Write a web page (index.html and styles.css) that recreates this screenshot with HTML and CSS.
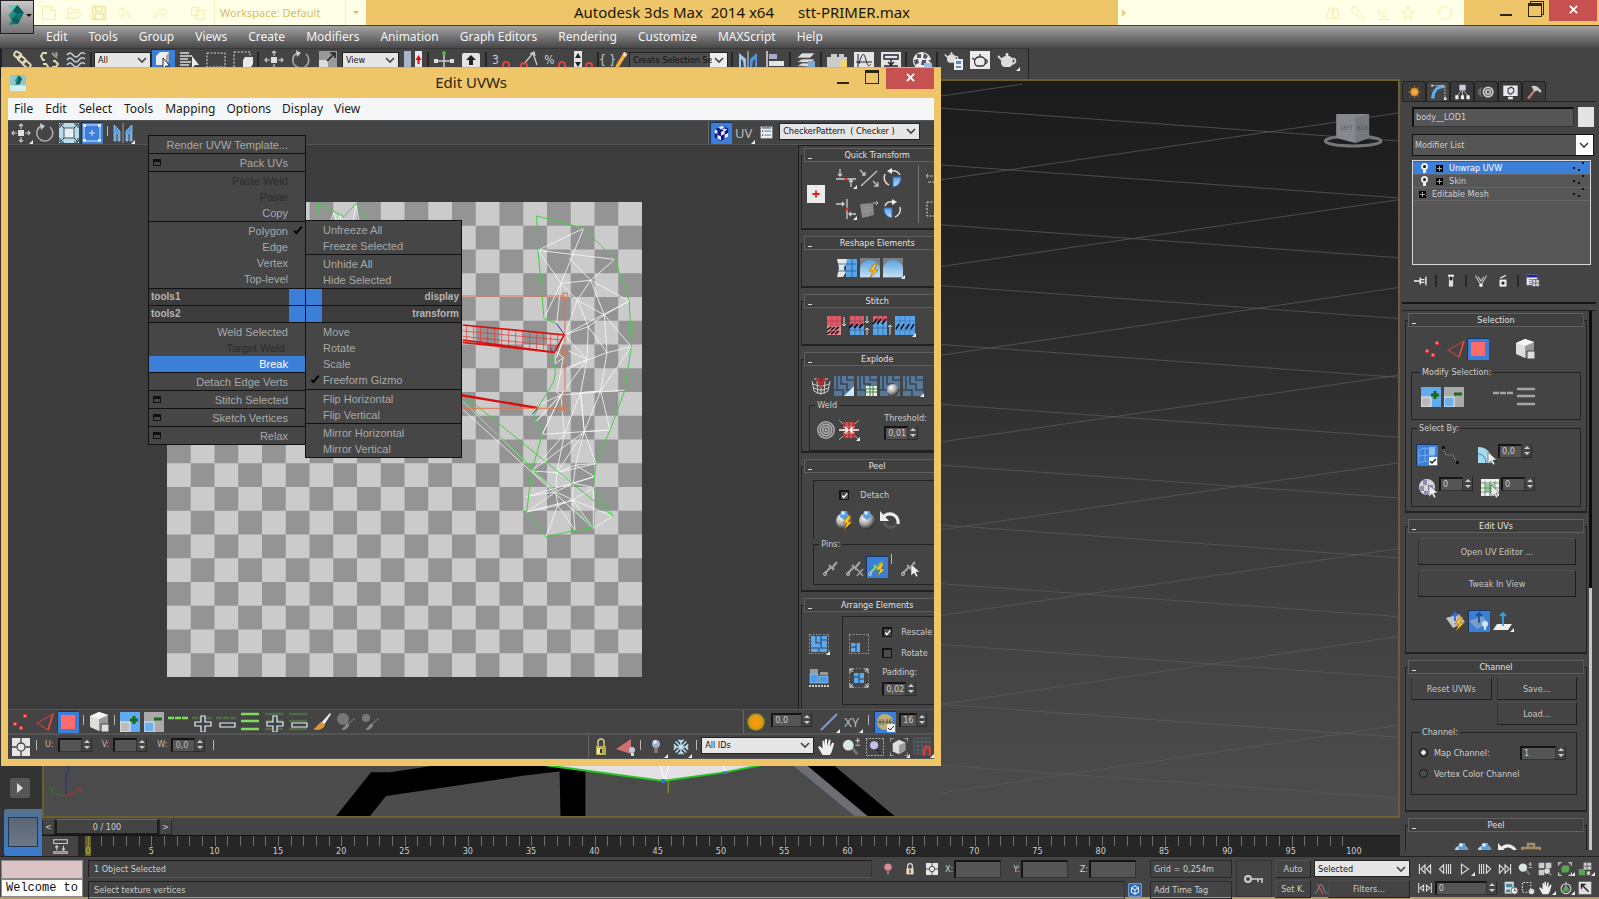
FILE: index.html
```html
<!DOCTYPE html>
<html lang="en">
<head>
    <meta charset="utf-8">
    <meta name="viewport" content="width=device-width, initial-scale=1">
    <title>Autodesk 3ds Max 2014 x64 stt-PRIMER.max</title>
    <link rel="stylesheet" href="styles.css">
</head>
<body>

    <!-- Icon sprite -->
    <svg class="sprite" aria-hidden="true">
        <defs>
            <linearGradient id="g-teal" x1="0" y1="0" x2="1" y2="1"><stop offset="0" stop-color="#2fb5aa"/><stop offset="1" stop-color="#04504f"/></linearGradient>
            <linearGradient id="g-blue" x1="0" y1="0" x2="0" y2="1"><stop offset="0" stop-color="#5aa2e0"/><stop offset="1" stop-color="#c4e0f4"/></linearGradient>
            <radialGradient id="g-ball" cx=".35" cy=".3" r=".8"><stop offset="0" stop-color="#fff"/><stop offset=".5" stop-color="#a8a8a8"/><stop offset="1" stop-color="#111"/></radialGradient>
            <radialGradient id="g-sun"><stop offset=".5" stop-color="#f39a0c"/><stop offset=".8" stop-color="#c99a1a"/><stop offset="1" stop-color="#5f7030"/></radialGradient>
            <pattern id="checks" width="47.5" height="47.5" patternUnits="userSpaceOnUse" patternTransform="translate(167 201)"><rect width="48" height="48" fill="#949494"/><path d="M23.75 0h23.75v23.75h-23.75zM0 23.75h23.75v23.75h-23.75z" fill="#cbcbcb"/></pattern>
            <linearGradient id="g-sky" x1="0" y1="0" x2="0" y2="1"><stop offset="0" stop-color="#1b1b1b"/><stop offset=".2" stop-color="#222"/><stop offset=".6" stop-color="#3b3b3b"/><stop offset="1" stop-color="#4d4d4d"/></linearGradient>
        </defs>
        <symbol id="max" viewBox="0 0 20 20"><path d="M4 1h8l6 7-5 10-9 1 3-4-3-5 4-4z" fill="url(#g-teal)"/><path d="M12 1l6 7-6 1-4-3zM7 15l5-6 1 9z" fill="#03605e"/><path d="M4 1h8L8 6z" fill="#5fcfc0"/></symbol>
        <symbol id="new" viewBox="0 0 20 20"><path d="M2 2h10l6 5v11H2zM12 2v5h6" fill="none" stroke="currentColor"/></symbol>
        <symbol id="open" viewBox="0 0 20 20"><path d="M2 17V4h6l2 2h6v3l3 2-5 6zM2 17l4-8h10" fill="none" stroke="currentColor"/></symbol>
        <symbol id="save" viewBox="0 0 20 20"><path d="M2 2h14l2 2v14H2zM6 2v6h8V2M5 18v-7h10v7" fill="none" stroke="currentColor" stroke-width="2"/></symbol>
        <symbol id="undo" viewBox="0 0 20 20"><path d="M2 9l6-6v4c6 0 10 3 10 9-2-4-5-5-10-5v4z" fill="none" stroke="currentColor"/></symbol>
        <symbol id="redo" viewBox="0 0 20 20"><path d="M18 9l-6-6v4C6 7 2 10 2 16c2-4 5-5 10-5v4z" fill="none" stroke="currentColor"/></symbol>
        <symbol id="pages" viewBox="0 0 20 20"><path d="M2 3h9v10H2zM8 7h10v11H8z" fill="none" stroke="currentColor"/></symbol>
        <symbol id="binoc" viewBox="0 0 20 20"><path d="M2 17l3-13h4v13zM11 17V4h4l3 13z" fill="none" stroke="currentColor"/></symbol>
        <symbol id="wrench" viewBox="0 0 20 20"><path d="M3 3c5-2 8 1 7 5l8 8-3 3-8-8C3 12 1 8 3 3z" fill="none" stroke="currentColor"/></symbol>
        <symbol id="dish" viewBox="0 0 20 20"><path d="M4 5l10 9c-6 2-12-2-10-9zM10 9l6-6M4 18h14" fill="none" stroke="currentColor"/></symbol>
        <symbol id="star" viewBox="0 0 20 20"><path d="M10 2l2 6h6l-5 4 2 6-5-4-5 4 2-6-5-4h6z" fill="none" stroke="currentColor"/></symbol>
        <symbol id="ring" viewBox="0 0 20 20"><circle cx="10" cy="10" r="8" fill="none" stroke="currentColor"/></symbol>

        <!-- main toolbar -->
        <symbol id="link" viewBox="0 0 20 20"><g fill="none" stroke="#e2d9b4" stroke-width="2"><rect x="2" y="2" width="7" height="5" rx="2" transform="rotate(35 5 5)"/><rect x="6" y="7" width="8" height="5" rx="2" transform="rotate(40 10 9)"/><rect x="11" y="12" width="8" height="5" rx="2" transform="rotate(40 15 14)"/></g></symbol>
        <symbol id="unlink" viewBox="0 0 20 20"><g fill="none" stroke="#e2d9b4" stroke-width="2"><path d="M8 3H4L2 6l2 4h2M13 17h4l2-3-3-3h-2"/><path d="M4 14h3l3 4" /></g><path d="M13 3l5 5M17 2l1 4" stroke="#999" stroke-width="2"/></symbol>
        <symbol id="waves" viewBox="0 0 20 20"><path d="M1 5q3-4 6 0t6 0 6-1M1 10q3-4 6 0t6 0 6-1M1 15q3-4 6 0t6 0 6-1" fill="none" stroke="#c5cdd4" stroke-width="1.500"/></symbol>
        <symbol id="selobj" viewBox="0 0 20 20"><path d="M3 6l4-4h9v9l-3 4H3z" fill="#eee"/><path d="M13 15V6l3-4v9z" fill="#aaa"/><path d="M10 8v11l3-3h4z" fill="#fff" stroke="#222"/></symbol>
        <symbol id="byname" viewBox="0 0 20 20"><path d="M1 3h9M1 6h12M1 9h8M1 12h11M1 15h9M1 18h12" stroke="#ddd" stroke-width="1.500"/><path d="M13 6v12l3-3h4z" fill="#eee"/></symbol>
        <symbol id="dashrect" viewBox="0 0 20 20"><path d="M1 3h18v14H1z" fill="none" stroke="#ddd" stroke-dasharray="2 1.5"/></symbol>
        <symbol id="dashwin" viewBox="0 0 20 20"><path d="M1 2h16v16H1z" fill="none" stroke="#ddd" stroke-dasharray="2 1.5"/><path d="M10 10l2-3h8v7l-2 3h-8z" fill="#e8e8e8"/></symbol>
        <symbol id="move" viewBox="0 0 20 20"><path d="M10 1v5M10 14v5M1 10h5M14 10h5M8 3l2-2 2 2M8 17l2 2 2-2M3 8l-2 2 2 2M17 8l2 2-2 2" fill="none" stroke="#c8c8c8" stroke-width="1.2"/><path d="M7 7h6v6H7z" fill="#e0e0e0"/></symbol>
        <symbol id="rotate" viewBox="0 0 20 20"><path d="M15 4a8 8 0 1 1-9-1" fill="none" stroke="#aaa" stroke-width="1.6"/><path d="M5 0l5 3-4 4z" fill="#ccc"/></symbol>
        <symbol id="scale" viewBox="0 0 20 20"><path d="M1 1h18v18H1z" fill="#999"/><path d="M1 10h9v9H1z" fill="#ddd"/><path d="M9 11l8-8M12 3h5v5" stroke="#222" stroke-width="1.6" fill="none"/></symbol>
        <symbol id="pivot" viewBox="0 0 20 20"><path d="M1 1h7v18H1z" fill="#a9b4c8"/><path d="M12 1h7v18h-7z" fill="#e4e4ea"/><path d="M15.500 5l3 5h-2v4h-2v-4h-2z" fill="#c11"/></symbol>
        <symbol id="manip" viewBox="0 0 20 20"><path d="M10 3v14M1 11h18" stroke="#ccc" stroke-width="1.500"/><circle cx="10" cy="3" r="2" fill="#4b4"/><path d="M0 9h4v4H0zM16 9h4v4h-4z" fill="#ddd"/></symbol>
        <symbol id="kbd" viewBox="0 0 20 20"><rect x="1" y="3" width="18" height="15" rx="2" fill="#e4e4e4"/><path d="M10 5l5 5h-3v5H8v-5H5z" fill="#222"/></symbol>
        <symbol id="magnet" viewBox="0 0 20 20"><path d="M12 19v-4a3 3 0 0 1 6 0v4" fill="none" stroke="#d44" stroke-width="2"/></symbol>
        <symbol id="angle" viewBox="0 0 20 20"><path d="M5 14L14 3l4 12M11 4l4-2 1 4" fill="none" stroke="#ccc" stroke-width="1.300"/><path d="M2 19v-3a3 3 0 0 1 6 0v3" fill="none" stroke="#d44" stroke-width="2"/></symbol>
        <symbol id="updown" viewBox="0 0 20 20"><path d="M1 1h8v18H1z" fill="#e4e4e4"/><path d="M5 3l3 5H2zM5 17l3-5H2z" fill="#222"/><path d="M13 19v-3a3 3 0 0 1 6 0v3" fill="none" stroke="#d44" stroke-width="2"/></symbol>
        <symbol id="pencil" viewBox="0 0 20 20"><path d="M8 15L16 2l3 2-8 13-4 2z" fill="#f0b040"/><path d="M16 2l3 2-1 3-3-2z" fill="#f3e6c8"/></symbol>
        <symbol id="mirror" viewBox="0 0 20 20"><path d="M1 3l7 6v9H6l-1-7-2-2v9H1z" fill="#9fc6ec"/><path d="M19 3l-7 6v9h2l1-7 2-2v9h2z" fill="#4f93dd"/><path d="M10 1v18" stroke="#ddd"/></symbol>
        <symbol id="align" viewBox="0 0 20 20"><path d="M2 1v18" stroke="#ddd" stroke-width="1.500"/><path d="M4 4h8v5H4z" fill="#aac"/><path d="M4 11h15v5H4z" fill="#e4e4e4"/></symbol>
        <symbol id="layers" viewBox="0 0 20 20"><path d="M1 8l5-5h13l-5 5zM1 12l5-3h13l-5 4zM1 16l5-3h13l-5 4z" fill="#ddd" stroke="#444" stroke-width=".6"/><path d="M12 11h7v8h-7z" fill="#7fa9cf"/></symbol>
        <symbol id="ribbon" viewBox="0 0 20 20"><path d="M0 7h4V4h6v3h2V4h5v3h3v11H0z" fill="#ccc"/><circle cx="17" cy="14" r="4" fill="#f3d66a"/></symbol>
        <symbol id="curve" viewBox="0 0 20 20"><path d="M0 2h20v18H0z" fill="#e4e4e4"/><path d="M4 4v14M2 12h16M5 14c3-12 5-12 7-4s3 6 5 4" stroke="#223" fill="none"/></symbol>
        <symbol id="schem" viewBox="0 0 20 20"><path d="M0 2h20v18H0z" fill="#e4e4e4"/><path d="M3 5h14v4H3zM10 9v6M7 12l3 3 3-3M3 16h14" fill="none" stroke="#223" stroke-width="1.400"/></symbol>
        <symbol id="material" viewBox="0 0 20 20"><circle cx="10" cy="11" r="9" fill="#eee"/><path d="M5 4h4v4H5zM12 3l4 3-2 3-3-1zM2 10l4-1 1 4-4 2zM10 10h4v5h-5zM16 10h3v3z" fill="#556"/><path d="M12 13h8v7h-8z" fill="#9ac0e0"/></symbol>
        <symbol id="teapot" viewBox="0 0 20 20"><path d="M5 8c3-3 8-3 10 0 2 4 0 8-2 9H7c-3-1-4-5-2-9z" fill="#ddd"/><path d="M5 10L1 6M15 9c4-2 5 4 0 5" fill="none" stroke="#ddd" stroke-width="1.800"/><circle cx="10" cy="4.500" r="1.500" fill="#eee"/></symbol>
        <symbol id="potset" viewBox="0 0 20 20"><use href="#teapot" width="17" height="15"/><path d="M11 9h9v11h-9z" fill="#eee"/><path d="M13 11h5v3h-5zM13 16h5v2h-5z" fill="#5b8fc4"/></symbol>
        <symbol id="potwin" viewBox="0 0 20 20"><path d="M0 1h20v18H0z" fill="#ececec"/><path d="M5 9c3-3 8-3 10 0 1 4 0 6-2 7H7c-2-1-3-4-2-7zM5 10L2 8M15 10c3-1 3 3 0 4M10 4v2" fill="none" stroke="#333" stroke-width="1.300"/></symbol>

        <!-- component modes -->
        <symbol id="verts" viewBox="0 0 20 20"><g fill="#fff" stroke="#d33" stroke-width="1.500"><circle cx="4" cy="12" r="1.500"/><circle cx="14" cy="4" r="1.500"/><circle cx="10" cy="16" r="1.500"/></g></symbol>
        <symbol id="edge" viewBox="0 0 20 20"><path d="M2 11L18 2l-5 16z" fill="none" stroke="#b84040" stroke-width="1.300"/><path d="M18 2l-5 16" stroke="#e44" stroke-width="1.500"/></symbol>
        <symbol id="poly" viewBox="0 0 20 20"><path d="M3 3h14v14H3z" fill="#ff6b6b"/></symbol>
        <symbol id="cube" viewBox="0 0 20 20"><path d="M1 4l9-4 9 3v11l-9 5-9-4z" fill="#ddd"/><path d="M10 7l9-4v11l-9 5z" fill="#999"/><path d="M1 4l9-4 9 3-9 4z" fill="#f6f6f6"/><path d="M12 12h8v8h-8z" fill="#ddd" stroke="#444"/></symbol>
        <symbol id="grow" viewBox="0 0 20 20"><path d="M0 0h20v20H0z" fill="#62abf0"/><path d="M0 10h10v10H0z" fill="#bbb" stroke="#eee"/><path d="M14 4v8M10 8h8" stroke="#176b17" stroke-width="3"/></symbol>
        <symbol id="shrink" viewBox="0 0 20 20"><path d="M0 0h20v20H0z" fill="#aaa"/><path d="M0 10h10v10H0z" fill="#6cb0ee" stroke="#eee"/><path d="M10 7h8" stroke="#176b17" stroke-width="3"/></symbol>
        <symbol id="dash3" viewBox="0 0 20 20"><path d="M0 6h20" stroke="currentColor" stroke-width="2.500" stroke-dasharray="6 1"/></symbol>
        <symbol id="lines3" viewBox="0 0 20 20"><path d="M1 2h18M1 9h18M1 17h18" stroke="currentColor" stroke-width="2.500"/></symbol>
        <symbol id="plus" viewBox="0 0 20 20"><path d="M9 4h4v6h6v4h-6v6H9v-6H3v-4h6z" fill="#39424c" stroke="#eee" stroke-width="1.200"/></symbol>
        <symbol id="minus" viewBox="0 0 20 20"><path d="M4 11h15v4H4z" fill="#39424c" stroke="#eee" stroke-width="1.200"/></symbol>
        <symbol id="brush" viewBox="0 0 20 20"><path d="M9 11l9-10 1 1-7 11z" fill="#eee"/><path d="M10 10l3 3c-2 5-8 6-12 4 4-1 5-6 9-7z" fill="#dd952f"/></symbol>
        <symbol id="brushoff" viewBox="0 0 20 20"><circle cx="7" cy="7" r="6" fill="#777"/><path d="M12 12l7-6M13 13c-2 4-4 5-7 4 3-1 3-4 5-5z" fill="#888" stroke="#888"/></symbol>
        <symbol id="brushoff2" viewBox="0 0 20 20"><circle cx="6" cy="6" r="4" fill="#777"/><path d="M12 12l7-6M13 13c-2 4-4 5-7 4 3-1 3-4 5-5z" fill="#888" stroke="#888"/></symbol>

        <!-- uv editor -->
        <symbol id="scalebox" viewBox="0 0 20 20"><path d="M0 0h20v20H0z" fill="#b9dcea"/><path d="M5 5h10v10H5z" fill="#e9eef2" stroke="#456"/><path d="M1 5V1h4M15 1h4v4M19 15v4h-4M5 19H1v-4M1 1l4 4M19 1l-4 4M1 19l4-4M19 19l-4-4" stroke="#234" fill="none"/></symbol>
        <symbol id="freeform" viewBox="0 0 20 20"><path d="M2 2h16v16H2zM10 7v6M7 10h6" fill="none" stroke="#dde8f8"/><path d="M1 1h3v3H1zM16 1h3v3h-3zM1 16h3v3H1zM16 16h3v3h-3z" fill="#dde8f8"/></symbol>
        <symbol id="mirrorblue" viewBox="0 0 20 20"><path d="M1 2l6 6v10H5V11l-2-2v9H1zM19 2l-6 6v10h2V11l2-2v9h2z" fill="#4a9ae8" stroke="#bfe0ff" stroke-width=".6"/><path d="M10 0v20" stroke="#999"/></symbol>
        <symbol id="dice" viewBox="0 0 20 20"><path d="M3 6l8-4 7 3v9l-8 5-7-4z" fill="#0b1b8a"/><path d="M7 4l4-2 3 2-4 2zM3 6l3 1v4l-3-1zM10 9l4-2v4l-4 2zM6 12l4 2v4l-4-2zM14 12l4-2v4l-4 2zM11 6l3-1 3 1-3 2z" fill="#eef"/></symbol>
        <symbol id="list" viewBox="0 0 20 20"><path d="M1 1h18v18H1z" fill="#eee"/><path d="M3 3h14" stroke="#333" stroke-width="1.500"/><path d="M3 8h2M3 14h2" stroke="#333" stroke-width="2"/><path d="M7 8h10M7 14h10" stroke="#5a9ad8" stroke-width="2"/></symbol>
        <symbol id="pivotred" viewBox="0 0 20 20"><path d="M0 0h20v20H0z" fill="#ececec"/><path d="M10 6v8M6 10h8" stroke="#d22" stroke-width="2"/></symbol>
        <symbol id="alignh" viewBox="0 0 20 20"><path d="M4 1v7M2 6l2 2 2-2M0 11h20M15 12v7M13 14l2-2 2 2" fill="none" stroke="#ccc" stroke-width="1.300"/><circle cx="10" cy="11" r="1.500" fill="#e22"/></symbol>
        <symbol id="alignv" viewBox="0 0 20 20"><path d="M0 5h8M6 3l2 2-2 2M11 0v20M20 15h-7M15 13l-2 2 2 2" fill="none" stroke="#ccc" stroke-width="1.300"/><circle cx="11" cy="10" r="1.500" fill="#e22"/></symbol>
        <symbol id="diag" viewBox="0 0 20 20"><path d="M2 18L18 3M1 2l5 5M14 13l5 5M3 7h3V4M15 18h4v-4" fill="none" stroke="#c4c4c4" stroke-width="1.300"/></symbol>
        <symbol id="rotcw" viewBox="0 0 20 20"><path d="M11 9v10a9 9 0 0 0 8-10z" fill="url(#g-blue)" stroke="#2a6fb5"/><path d="M3 6a8 8 0 0 0 4 11M8 3c5-1 8 0 10 4" fill="none" stroke="#ddd" stroke-width="1.500"/><path d="M10 0v6L5 3z" fill="#eee"/></symbol>
        <symbol id="rotccw" viewBox="0 0 20 20"><path d="M10 9v10a9 9 0 0 1-8-10z" fill="url(#g-blue)" stroke="#2a6fb5"/><path d="M18 8a8 8 0 0 1-5 10M3 7c1-3 4-5 8-4" fill="none" stroke="#ddd" stroke-width="1.500"/><path d="M10 0v6l5-3z" fill="#eee"/></symbol>
        <symbol id="tilt" viewBox="0 0 20 20"><path d="M1 5l13-1 1 12-12 3z" fill="#888"/><path d="M3 9l11-1M3 13l11-2M7 5l2 13" stroke="#999"/><path d="M14 4h5M17 2l2 2-2 2" fill="none" stroke="#bbb"/></symbol>
        <symbol id="spread" viewBox="0 0 20 20"><path d="M0 8h8M2 6L0 8l2 2M10 14V3M10 8h10M2 14h16" fill="none" stroke="#bbb" stroke-dasharray="3 1"/></symbol>
        <symbol id="straight" viewBox="0 0 20 20"><path d="M0 1h10v5c-4 3-4 5-1 8l-3 5H0l2-9z" fill="#e6e6e6"/><path d="M10 1h10v18H9V6z" fill="#5aa4ea"/><path d="M1 6h18M1 13h18M15 1v18" stroke="#235d9c" stroke-width=".8"/></symbol>
        <symbol id="dome" viewBox="0 0 20 20"><path d="M0 0h20v20H0z" fill="#7b7f85"/><path d="M0 19V11a10 9 0 0 1 20 0v8z" fill="url(#g-blue)"/></symbol>
        <symbol id="bolt" viewBox="0 0 20 20"><path d="M14 6l-5 7h4l-3 7 8-8h-4l3-6z" fill="#ffc52e" stroke="#8a5a00" stroke-width=".6"/></symbol>
        <symbol id="stitch1" viewBox="0 0 20 20"><path d="M1 0h14v10H1z" fill="#e05a68"/><path d="M1 10h14v9H1z" fill="#e08a94"/><path d="M1 5h14M6 0v19M11 0v19" stroke="#b84050" stroke-width=".8"/><path d="M1 14l4-3M5 14l4-3M9 14l4-3M1 18l4-3M5 18l4-3M9 18l4-3" stroke="#111" stroke-width="1.500"/><path d="M18 1v9M16 8l2 2 2-2" stroke="#ddd" fill="none"/></symbol>
        <symbol id="stitch2" viewBox="0 0 20 20"><path d="M1 0h14v9H1z" fill="#e05a68"/><path d="M1 9h14v10H1z" fill="#5aa4ea"/><path d="M1 5h14M1 14h14M6 0v19M11 0v19" stroke="#446" stroke-width=".5"/><path d="M0 12l4-4M5 12l4-4M10 12l4-4" stroke="#111" stroke-width="1.800"/><path d="M18 0v7M16 5l2 2 2-2M18 19v-7M16 14l2-2 2 2" stroke="#ddd" fill="none"/></symbol>
        <symbol id="stitch3" viewBox="0 0 20 20"><path d="M1 0h14v5H1z" fill="#e05a68"/><path d="M1 5h14v14H1z" fill="#5aa4ea"/><path d="M1 12h14M6 0v19M11 0v19" stroke="#246" stroke-width=".5"/><path d="M1 8l4-5M5 8l4-5M10 8l4-5" stroke="#111" stroke-width="1.800"/><path d="M18 19V9M16 11l2-2 2 2" stroke="#ddd" fill="none"/></symbol>
        <symbol id="stitch4" viewBox="0 0 20 20"><path d="M0 0h20v19H0z" fill="#5aa4ea"/><path d="M0 5h20M0 14h20M5 0v19M10 0v19M15 0v19" stroke="#2f6fae" stroke-width=".6"/><path d="M1 13l3-5M6 13l3-5M11 13l3-5M16 13l3-5" stroke="#112" stroke-width="1.500"/></symbol>
        <symbol id="basket" viewBox="0 0 20 20"><path d="M1 5l2 10q7 5 14 0l2-10M2 8q8 4 16 0M3 12q7 4 14 0M6 5l1 13M10 6v13M14 5l-1 13M3 3h5M12 3h5" fill="none" stroke="#ccc"/><path d="M6 2l4 7 3-7" fill="none" stroke="#c22" stroke-width="2.500"/></symbol>
        <symbol id="bricks" viewBox="0 0 20 20"><path d="M0 0h20v20H0z" fill="#587896"/><path d="M7 0v8h6v6h7M13 0v4h7M0 14h9v6M3 0v14" fill="none" stroke="#33475c" stroke-width="1.600"/></symbol>
        <symbol id="bricks2" viewBox="0 0 20 20"><path d="M2 2h16v16H2z" fill="#62a8e6"/><path d="M7 2v7h5v5h6M12 2v7M2 14h8v4M12 6h6" fill="none" stroke="#24507f" stroke-width="1.200"/><path d="M0 0h20v20H0z" fill="none" stroke="#ddd" stroke-dasharray="2 1.500"/></symbol>
        <symbol id="bricksml" viewBox="0 0 20 20"><path d="M2 9h9v9H2z" fill="#62a8e6"/><path d="M2 13h5V9M7 13v5" fill="none" stroke="#1d3f66"/><path d="M0 0h20v20H0z" fill="none" stroke="#ddd" stroke-dasharray="2 1.500"/></symbol>
        <symbol id="bricksmid" viewBox="0 0 20 20"><path d="M5 5h10v10H5z" fill="#62a8e6"/><path d="M5 9h5V5M10 9v6M10 11h5" fill="none" stroke="#1d3f66"/><path d="M1 5V1h4M15 1h4v4M19 15v4h-4M5 19H1v-4M1 1l3 3M19 1l-3 3M1 19l3-3M19 19l-3-3" stroke="#ddd" fill="none"/><path d="M0 0h20v20H0z" fill="none" stroke="#bbb" stroke-dasharray="1.500 2"/></symbol>
        <symbol id="packs" viewBox="0 0 20 20"><path d="M1 1h8v5H1zM11 4h8v3h-8z" fill="#999"/><path d="M1 6h8v9H1zM10 8h9v7h-9z" fill="#4d9de8" stroke="#bfe0ff" stroke-width=".5"/><path d="M0 18h20" stroke="#ccc" stroke-width="2" stroke-dasharray="2 1"/></symbol>
        <symbol id="corner" viewBox="0 0 20 20"><path d="M20 10v10H10z" fill="#cfe6ff"/></symbol>
        <symbol id="ball" viewBox="0 0 20 20"><circle cx="10" cy="10" r="6" fill="url(#g-ball)"/></symbol>
        <symbol id="minigrid" viewBox="0 0 20 20"><path d="M9 10h11v10H9z" fill="#eee"/><path d="M9 13h11M9 16h11M13 10v10M16 10v10" stroke="#3a8a3a"/></symbol>
        <symbol id="target" viewBox="0 0 20 20"><circle cx="10" cy="10" r="9" fill="#aaa"/><g fill="none" stroke="#555"><circle cx="10" cy="10" r="7"/><circle cx="10" cy="10" r="4.500"/><circle cx="10" cy="10" r="2"/></g></symbol>
        <symbol id="weld" viewBox="0 0 20 20"><path d="M4 2h12v16H4z" fill="#b13b3b"/><path d="M8 2v16M12 2v16M4 7h12M4 13h12" stroke="#eaa" stroke-width=".6"/><path d="M0 10h8M12 10h8M6 7l3 3-3 3M14 7l-3 3 3 3" stroke="#fff" fill="none" stroke-width="1.500"/><path d="M0 0l4 4M20 0l-4 4M0 20l4-4M20 20l-4-4" stroke="#aaa"/></symbol>
        <symbol id="peelball" viewBox="0 0 20 20"><circle cx="10" cy="11" r="8" fill="url(#g-ball)"/><path d="M7 1h6l1 6-4 3-4-3z" fill="#5b9fdc"/><circle cx="9" cy="3" r="1.800" fill="#dff0ff"/></symbol>
        <symbol id="reset" viewBox="0 0 20 20"><path d="M4 12a7 7 0 0 0 12 3" stroke="#5a5a5a" stroke-width="3" fill="none"/><path d="M4 6c7-5 15 0 14 8" stroke="#eee" stroke-width="3" fill="none"/><path d="M0 1v10h9z" fill="#eee"/></symbol>
        <symbol id="pin" viewBox="0 0 20 20"><path d="M3 16l6-6M7 8l5 5M10 11l5-6" stroke="currentColor" stroke-width="2" fill="none"/><circle cx="3" cy="17" r="1.500" fill="none" stroke="#ccc"/></symbol>
        <symbol id="cursor" viewBox="0 0 20 20"><path d="M11 7v12l3-3 2 4 2-1-2-4h4z" fill="#eee" stroke="#333" stroke-width=".5"/></symbol>
        <symbol id="cross" viewBox="0 0 20 20"><path d="M12 12l6 7M18 12l-6 7" stroke="#999" stroke-width="1.800"/></symbol>

        <symbol id="sun" viewBox="0 0 20 20"><circle cx="10" cy="10" r="9" fill="url(#g-sun)"/></symbol>
        <symbol id="slash" viewBox="0 0 20 20"><path d="M2 18L18 2" stroke="#7d9be0" stroke-width="2"/></symbol>
        <symbol id="brushsym" viewBox="0 0 20 20"><circle cx="10" cy="10" r="8" fill="#bfae72"/><path d="M2 10h16M5 7v6M8 7v6M12 7v6M15 7v6" stroke="#555"/><path d="M12 12h8v8h-8z" fill="#eee"/><path d="M13 16l2 2 4-4" stroke="#222" fill="none"/></symbol>
        <symbol id="lockgold" viewBox="0 0 20 20"><path d="M7 10V5a3 3 0 0 1 6 0v5" fill="none" stroke="#d3cc84" stroke-width="1.500"/><path d="M5 9h10v9H5z" fill="#b5a956"/><path d="M6 11h4v6H6z" fill="#e8e2b0"/><path d="M10 12v4" stroke="#333" stroke-width="2"/></symbol>
        <symbol id="tri" viewBox="0 0 20 20"><path d="M1 12L16 2v15z" fill="#cf6f70"/><circle cx="17" cy="13" r="3" fill="#bcd"/><path d="M16 16h3v3h-3z" fill="#ddd"/></symbol>
        <symbol id="bulb" viewBox="0 0 20 20"><circle cx="9" cy="7" r="4" fill="#9fb2bf"/><circle cx="8" cy="5" r="2" fill="#dde8f0"/><path d="M7 11h4v5H7z" fill="#777"/></symbol>
        <symbol id="snow" viewBox="0 0 20 20"><path d="M10 2v16M2 10h16M4 4l12 12M16 4L4 16M7 2l3 3 3-3M7 18l3-3 3 3M2 7l3 3-3 3M18 7l-3 3 3 3" stroke="#bfe2f8" stroke-width="1.500" fill="none"/></symbol>
        <symbol id="hand" viewBox="0 0 20 20"><path d="M5 19L0 10l2-1 3 3V3h2v6L8 1h2v8l2-7h2l-1 8 3-5 2 1-3 10-2 3z" fill="#eee"/></symbol>
        <symbol id="lens" viewBox="0 0 20 20"><path d="M11 11l6 7" stroke="#777" stroke-width="3"/><circle cx="7" cy="8" r="6" fill="#d8e6e6"/><path d="M15 3h5M17.500 0v6M15 8h5" stroke="#ddd"/></symbol>
        <symbol id="lensbox" viewBox="0 0 20 20"><path d="M0 0h20v20H0z" fill="none" stroke="#ddd" stroke-width="1.500" stroke-dasharray="2 1.500"/><path d="M11 11l5 6" stroke="#335" stroke-width="3"/><circle cx="9" cy="8" r="4.500" fill="#c8c0e8"/></symbol>
        <symbol id="cubefit" viewBox="0 0 20 20"><path d="M3 6l7-4 7 3v9l-7 4-7-3z" fill="#ddd"/><path d="M10 8l7-3v9l-7 4z" fill="#999"/><path d="M0 4V0h4M16 0h4v4M20 16v4h-4M4 20H0v-4" stroke="#eee" fill="none"/></symbol>
        <symbol id="gridmag" viewBox="0 0 20 20"><path d="M1 1h16v16H1zM5 1v16M9 1v16M13 1v16M1 5h16M1 9h16M1 13h16" stroke="#667080" fill="none" stroke-width=".7"/><path d="M11 19v-6a3 3 0 0 1 6 0v6" stroke="#d43a3a" stroke-width="2.500" fill="none"/></symbol>
        <symbol id="coord" viewBox="0 0 20 20"><path d="M0 0h20v20H0z" fill="#e6e6e6"/><circle cx="10" cy="10" r="4.500" fill="none" stroke="#444" stroke-width="1.500"/><path d="M10 0v5M10 15v5M0 10h5M15 10h5" stroke="#444" stroke-width="1.500"/></symbol>

        <!-- command panel -->
        <symbol id="burst" viewBox="0 0 20 20"><circle cx="10" cy="10" r="5" fill="#f09a2a"/><circle cx="10" cy="10" r="2.500" fill="#fff0a0"/><path d="M10 2v16M2 10h16M4 4l12 12M16 4L4 16" stroke="#d98a2a" stroke-width=".8"/></symbol>
        <symbol id="arc" viewBox="0 0 20 20"><path d="M3 18C3 9 8 3 17 3" stroke="#5cb0f0" stroke-width="4" fill="none"/><path d="M2 2h16v16" stroke="#ccc" stroke-dasharray="3 1" fill="none"/><path d="M1 1h2v2H1zM17 17h3v3h-3z" fill="#eee"/></symbol>
        <symbol id="tree" viewBox="0 0 20 20"><path d="M6 1h8v7H6z" fill="#ccd"/><path d="M10 8v7M9 8l-6 7M11 8l6 7" stroke="#ccc"/><path d="M1 14h4v5H1zM8 14h4v5H8zM15 14h4v5h-4z" fill="#eee"/></symbol>
        <symbol id="motion" viewBox="0 0 20 20"><circle cx="12" cy="10" r="7" fill="#ccc"/><circle cx="12" cy="10" r="4.500" fill="none" stroke="#444"/><circle cx="12" cy="10" r="1.800" fill="#555"/><path d="M4 4q-4 6 0 12M1 6q-2 4 0 8" stroke="#999" fill="none"/></symbol>
        <symbol id="display" viewBox="0 0 20 20"><path d="M1 2h18v13H1zM7 16h6v3H7z" fill="#e6e6f0"/><path d="M7 6l4-2 3 2v4l-4 3-3-2z" fill="none" stroke="#333" stroke-width="1.300"/></symbol>
        <symbol id="hammer" viewBox="0 0 20 20"><path d="M2 18l9-11" stroke="#b98078" stroke-width="3"/><path d="M6 3c4-2 8-1 13 6l-2 2-3-3-4 1z" fill="#ccc"/></symbol>
        <symbol id="pushpin" viewBox="0 0 20 20"><path d="M0 10h8M9 5v10M9 8h6M9 12h6M17 4v12" stroke="#eee" stroke-width="2"/></symbol>
        <symbol id="tube" viewBox="0 0 20 20"><path d="M6 1h8v3H6z" fill="#fff"/><path d="M7 4h6v14H7z" fill="#ddd"/><path d="M8 4h4v5H8z" fill="#222"/></symbol>
        <symbol id="unique" viewBox="0 0 20 20"><path d="M2 2l8 14 8-14M6 4l4 6 4-6" fill="none" stroke="#ccc" stroke-width="1.500"/><circle cx="10" cy="16" r="2.500" fill="#eee"/></symbol>
        <symbol id="trash" viewBox="0 0 20 20"><path d="M5 8h10v10H5z" fill="#eee"/><path d="M6 6l8-4" stroke="#ddd" stroke-width="2"/><path d="M8 11h4v4H8z" fill="#222"/></symbol>
        <symbol id="config" viewBox="0 0 20 20"><path d="M1 1h15v15H1z" fill="#eef"/><path d="M1 1h15v4H1z" fill="#22a"/><path d="M4 8h4M4 11h4M4 14h4" stroke="#338"/><path d="M9 8h10v10H9z" fill="#ddd" stroke="#444"/><path d="M9 13h10M14 8v10" stroke="#444"/></symbol>
        <symbol id="eltsel" viewBox="0 0 20 20"><path d="M2 5l6-2v13l-6 2zM8 3l8 2v12l-8-1M2 11l6-1 8 1" fill="none" stroke="#7fb4ee" stroke-width=".8"/><path d="M12 2h6v8h-6z" fill="#8fc0ee"/><path d="M12 12h8v8h-8z" fill="#fff"/><path d="M13 16l2 2 4-4" stroke="#222" stroke-width="1.500" fill="none"/></symbol>
        <symbol id="dots" viewBox="0 0 20 20"><path d="M3 3l3 7h7l4 8" stroke="#999" stroke-dasharray="1.500 1.500" fill="none"/><path d="M2 1h3v3H2zM16 16h3v3h-3z" fill="#111"/></symbol>
        <symbol id="fan" viewBox="0 0 20 20"><path d="M1 2c9 0 14 6 15 16H1z" fill="#a8d8ee"/><path d="M1 9c5 0 8 4 8 9" stroke="#2a8ab0" fill="none"/></symbol>
        <symbol id="chkball" viewBox="0 0 20 20"><circle cx="9" cy="9" r="8" fill="#d5d5dd"/><path d="M5 2h4v5H5zM10 7h5v5h-5zM2 8h4v5H2zM6 13h4v4H6z" fill="#8e8eae"/></symbol>
        <symbol id="table" viewBox="0 0 20 20"><path d="M1 1h18v17H1z" fill="#eee"/><path d="M5 6h9v8H5z" fill="#9c9"/><path d="M1 5h18M1 10h18M1 14h18M5 3v15M10 3v15M15 3v15" stroke="#475" stroke-width=".7"/></symbol>
        <symbol id="plane" viewBox="0 0 20 20"><path d="M0 7l13-4 6 8-12 6z" fill="#c4c4c4"/><path d="M9 10V2M6 5l3-3 3 3" stroke="#2f6fd6" stroke-width="1.800" fill="none"/></symbol>
        <symbol id="planeon" viewBox="0 0 20 20"><path d="M0 10l14-5 5 7-11 6z" fill="#7b9cc4"/><path d="M10 12V2M7 5l3-3 3 3" stroke="#1e4f96" stroke-width="1.800" fill="none"/><circle cx="16" cy="13" r="3" fill="#cfe6f6"/><path d="M15 15h2v4h-2z" fill="#cfe6f6"/></symbol>
        <symbol id="plane2" viewBox="0 0 20 20"><path d="M4 13h15l-4 6H0z" fill="#eee"/><path d="M10 15V2M7 5l3-3 3 3" stroke="#3f9fd6" stroke-width="1.800" fill="none"/></symbol>
        <symbol id="case" viewBox="0 0 20 20"><path d="M1 6h18v13H1zM7 6V2h6v4" fill="none" stroke="#a58c63" stroke-width="2.500"/></symbol>

        <!-- status bar -->
        <symbol id="balloon" viewBox="0 0 20 20"><ellipse cx="10" cy="7" rx="6" ry="6" fill="#d98a96"/><path d="M7 11h6l-3 4z" fill="#c5606e"/><path d="M10 14v5" stroke="#ddd" stroke-width="1.500"/></symbol>
        <symbol id="lock" viewBox="0 0 20 20"><path d="M6 10V5a4 4 0 0 1 8 0v5" fill="none" stroke="#ddd" stroke-width="2"/><path d="M4 9h12v10H4z" fill="#e6dcc0"/><path d="M10 11v6" stroke="#333" stroke-width="2"/></symbol>
        <symbol id="key" viewBox="0 0 20 20"><circle cx="4" cy="10" r="3" fill="none" stroke="#ccc" stroke-width="2"/><path d="M7 10h12M14 10v3M18 10v4" stroke="#ccc" stroke-width="1.500"/></symbol>
        <symbol id="tangent" viewBox="0 0 20 20"><path d="M1 16c5 0 5-12 9-12s3 12 9 12" stroke="#aaa" fill="none"/><path d="M5 3l8 15" stroke="#d55" stroke-width="1.500"/></symbol>
        <symbol id="tostart" viewBox="0 0 20 20"><path d="M2 3v14M10 4l-6 6 6 6zM18 4l-6 6 6 6z" fill="none" stroke="#ddd" stroke-width="1.600"/></symbol>
        <symbol id="prev" viewBox="0 0 20 20"><path d="M8 4l-6 6 6 6zM12 3v14M15 3v14M18 3v14" fill="none" stroke="#ddd" stroke-width="1.600"/></symbol>
        <symbol id="play" viewBox="0 0 20 20"><path d="M5 3l10 7-10 7z" fill="none" stroke="#ddd" stroke-width="1.600"/></symbol>
        <symbol id="next" viewBox="0 0 20 20"><path d="M12 4l6 6-6 6zM2 3v14M5 3v14M8 3v14" fill="none" stroke="#ddd" stroke-width="1.600"/></symbol>
        <symbol id="toend" viewBox="0 0 20 20"><path d="M18 3v14M10 4l6 6-6 6zM2 4l6 6-6 6z" fill="none" stroke="#ddd" stroke-width="1.600"/></symbol>
        <symbol id="keymode" viewBox="0 0 20 20"><path d="M1 3v14M19 3v14M8 6l-5 4 5 4zM12 6l5 4-5 4z" fill="none" stroke="#ddd" stroke-width="1.500"/></symbol>
        <symbol id="four" viewBox="0 0 20 20"><path d="M1 1h8v8H1zM11 1h8v8h-8zM1 11h8v8H1z" fill="#ccc"/><circle cx="13" cy="13" r="4" fill="#ddd"/><path d="M15 15l4 4" stroke="#999" stroke-width="2"/></symbol>
        <symbol id="green" viewBox="0 0 20 20"><path d="M5 7l3-2h8v8l-3 2H5z" fill="#5f9f57"/><path d="M1 5V1h4M15 1h4v4M19 15v4h-4M5 19H1v-4" stroke="#eee" stroke-width="1.500" fill="none"/></symbol>
        <symbol id="greens" viewBox="0 0 20 20"><path d="M8 1h11v10H8z" fill="#ccc"/><path d="M1 10h9v9H1z" fill="#5f9f57"/><path d="M13 1v10M8 6h11M12 13h6v6h-6z" fill="#ccc" stroke="#444"/></symbol>
        <symbol id="timecfg" viewBox="0 0 20 20"><path d="M1 1h13v17H1z" fill="#ddd"/><path d="M3 4h9v5H3zM3 12h6v4H3z" fill="#48a"/><circle cx="15" cy="14" r="5" fill="#eee" stroke="#444"/><path d="M15 11v3h3" stroke="#222" fill="none"/></symbol>
        <symbol id="region" viewBox="0 0 20 20"><path d="M14 12V2H2v14h9" fill="none" stroke="#ddd" stroke-width="1.500" stroke-dasharray="2.500 2"/><circle cx="15" cy="15" r="4" fill="#ddd"/></symbol>
        <symbol id="orbit" viewBox="0 0 20 20"><circle cx="10" cy="11" r="7" fill="none" stroke="#ddd" stroke-width="1.500"/><path d="M6 10l4-3 4 3v5H6z" fill="#5f9f57"/><path d="M10 1v8" stroke="#ddd"/></symbol>
        <symbol id="maximize" viewBox="0 0 20 20"><path d="M1 1h18v18H1z" fill="#ddd"/><path d="M15 15L6 6M5 11V5h6" stroke="#222" stroke-width="2" fill="none"/></symbol>
        <symbol id="tag" viewBox="0 0 20 20"><path d="M1 1h18v18H1z" fill="#2866b4" stroke="#9cf"/><path d="M5 7l5-3 5 3v6l-5 3-5-3zM5 7l5 3 5-3M10 10v6" fill="none" stroke="#eee" stroke-width="1.500"/></symbol>
        <symbol id="minicurve" viewBox="0 0 20 20"><path d="M1 1h18v5H1zM1 17h18v2H1zM5 9v6M3 11l2-2 2 2M14 9v6M12 13l2 2 2-2" fill="none" stroke="#ccc" stroke-width="1.500"/></symbol>
    </svg>

    <!-- Title bar -->
    <header class="titlebar">
        <button class="app-button" aria-label="Application menu"><svg class="icon"><use href="#max"/></svg><i></i></button>
        <div class="quick">
            <svg class="icon"><use href="#new"/></svg>
            <svg class="icon"><use href="#open"/></svg>
            <svg class="icon"><use href="#save"/></svg>
            <svg class="icon"><use href="#undo"/></svg>
            <svg class="icon"><use href="#redo"/></svg>
            <svg class="icon"><use href="#pages"/></svg>
            <select class="workspace" aria-label="Workspace"><option>Workspace: Default</option></select>
            <span class="more"></span>
        </div>
        <div class="title"><span>Autodesk 3ds Max&nbsp; 2014 x64</span><span>stt-PRIMER.max</span></div>
        <div class="info">
            <span class="tri-right"></span>
            <input class="search" type="text" aria-label="Search">
            <svg class="icon"><use href="#binoc"/></svg>
            <svg class="icon"><use href="#wrench"/></svg>
            <svg class="icon"><use href="#dish"/></svg>
            <svg class="icon"><use href="#star"/></svg>
            <svg class="icon wide"><use href="#ring"/></svg>
        </div>
        <div class="win-buttons">
            <button class="win-min" aria-label="Minimize"></button>
            <button class="win-restore" aria-label="Restore"></button>
            <button class="win-close" aria-label="Close"><svg viewBox="0 0 10 10"><path d="M1 1l8 8M9 1L1 9"/></svg></button>
        </div>
    </header>

    <nav class="menubar">
        <a href="#">Edit</a><a href="#">Tools</a><a href="#">Group</a><a href="#">Views</a><a href="#">Create</a><a href="#">Modifiers</a><a href="#">Animation</a><a href="#">Graph Editors</a><a href="#">Rendering</a><a href="#">Customize</a><a href="#">MAXScript</a><a href="#">Help</a>
    </nav>

    <div class="toolbar">
        <button class="tool"><svg class="icon"><use href="#link"/></svg></button>
        <button class="tool"><svg class="icon"><use href="#unlink"/></svg></button>
        <button class="tool"><svg class="icon"><use href="#waves"/></svg></button>
        <i class="sep"></i>
        <select class="light w56" aria-label="Selection filter"><option>All</option></select>
        <button class="tool on"><svg class="icon"><use href="#selobj"/></svg></button>
        <button class="tool"><svg class="icon"><use href="#byname"/></svg></button>
        <button class="tool"><svg class="icon"><use href="#dashrect"/></svg></button>
        <button class="tool"><svg class="icon"><use href="#dashwin"/></svg></button>
        <i class="sep"></i>
        <button class="tool"><svg class="icon"><use href="#move"/></svg></button>
        <button class="tool"><svg class="icon"><use href="#rotate"/></svg></button>
        <button class="tool"><svg class="icon"><use href="#scale"/></svg></button>
        <select class="light w56" aria-label="Reference coordinate system"><option>View</option></select>
        <button class="tool"><svg class="icon"><use href="#pivot"/></svg></button>
        <i class="sep"></i>
        <button class="tool"><svg class="icon"><use href="#manip"/></svg></button>
        <button class="tool"><svg class="icon"><use href="#kbd"/></svg></button>
        <i class="sep"></i>
        <button class="tool glyph"><span>3</span><svg class="icon"><use href="#magnet"/></svg></button>
        <button class="tool"><svg class="icon"><use href="#angle"/></svg></button>
        <button class="tool glyph"><span>%</span><svg class="icon"><use href="#magnet"/></svg></button>
        <button class="tool"><svg class="icon"><use href="#updown"/></svg></button>
        <i class="sep"></i>
        <button class="tool glyph"><span>{ }</span><svg class="icon"><use href="#pencil"/></svg></button>
        <select class="light dim w98" aria-label="Named selection sets"><option>Create Selection Set</option></select>
        <i class="sep"></i>
        <button class="tool"><svg class="icon"><use href="#mirror"/></svg></button>
        <button class="tool"><svg class="icon"><use href="#align"/></svg></button>
        <i class="sep"></i>
        <button class="tool"><svg class="icon"><use href="#layers"/></svg></button>
        <i class="sep"></i>
        <button class="tool"><svg class="icon"><use href="#ribbon"/></svg></button>
        <button class="tool"><svg class="icon"><use href="#curve"/></svg></button>
        <button class="tool"><svg class="icon"><use href="#schem"/></svg></button>
        <i class="sep"></i>
        <button class="tool"><svg class="icon"><use href="#material"/></svg></button>
        <i class="sep"></i>
        <button class="tool"><svg class="icon"><use href="#potset"/></svg></button>
        <button class="tool"><svg class="icon"><use href="#potwin"/></svg></button>
        <button class="tool fly"><svg class="icon"><use href="#teapot"/></svg></button>
    </div>

    <main class="workarea">
        <aside class="viewtabs">
            <button class="tab-play" aria-label="Layout tabs"></button>
            <button class="tab-layout" aria-label="Layout"><i></i></button>
        </aside>

        <div class="center">
            <div class="viewport">
                <svg class="scene" viewBox="42 80 1358 738" preserveAspectRatio="xMaxYMax slice">
                    <rect x="42" y="80" width="1358" height="738" fill="url(#g-sky)"/>
                    <g class="ground">
                        <path d="M941 108l459 33M941 165l459 33M941 225l459 33M941 286l459 33M941 345l459 33M941 405l459 33M941 466l459 33M941 526l459 33M941 585l459 33M941 646l459 33M941 706l459 33M941 767l459 33"/>
                        <path d="M941 96l82-12M941 180l459-67M941 267l459-67M941 356l459-68M941 443l459-67M941 531l459-67M941 617l459-67M941 706l459-68M941 795l459-68"/>
                    </g>
                    <path d="M370 774h19l47-7h124v6l-40 5-135 20-16 20h-34zM559 767h26v51h-25z"/>
                    <path d="M793 767h16l60 51h-14z" fill="#6c6e74"/>
                    <path d="M807 767h27l61 51h-27z"/>
                    <path d="M538 766l125 17 63-9 40-8z" fill="#e4dfe3" stroke="#22c522" stroke-width="2"/>
                    <path d="M660 767l4 15 5-15M723 767l2 7" stroke="#fff" fill="none"/>
                    <path d="M661 781h4v4h-4zM723 773h4v3h-4z" fill="#3579c9"/>
                    <path d="M668 783v12" stroke="#a99f2c"/>
                    <!-- view cube -->
                    <ellipse cx="1355" cy="141" rx="28" ry="5" fill="none" stroke="#75757a" stroke-width="3"/>
                    <path d="M1338 114h33v24l-14 5-19-5z" fill="#86888d"/>
                    <path d="M1357 118l14-4v24l-14 5z" fill="#77797e"/>
                    <text x="1342" y="130" class="cube-label">LEFT</text><text x="1359" y="130" class="cube-label">BCK</text>
                    <!-- axis tripod -->
                    <path d="M64 776v21" stroke="#2b2b9c"/><path d="M64 797q-9 1-14-3M47 788l3 4 3-4M50 792v4" stroke="#2b7a2b" fill="none"/><path d="M64 797q8 0 12-4M75 788l5 6M80 788l-5 6" stroke="#a33" fill="none"/><path d="M65 769h3l-3 5h3" stroke="#2b2bac" fill="none"/>
                </svg>
            </div>
            <div class="timeslider">
                <button aria-label="Previous frame">&lt;</button>
                <button class="thumb">0 / 100</button>
                <button aria-label="Next frame">&gt;</button>
            </div>
            <div class="trackbar">
                <button class="mini-curve" aria-label="Open mini curve editor"><svg class="icon"><use href="#minicurve"/></svg></button>
                <div class="track">
                    <div class="ticks"></div>
                    <div class="labels">
                        <span class="now">0</span><span>5</span><span>10</span><span>15</span><span>20</span><span>25</span><span>30</span><span>35</span><span>40</span><span>45</span><span>50</span><span>55</span><span>60</span><span>65</span><span>70</span><span>75</span><span>80</span><span>85</span><span>90</span><span>95</span><span>100</span>
                    </div>
                </div>
            </div>
        </div>

        <!-- Command panel -->
        <aside class="panel">
            <div class="tabs">
                <button><svg class="icon"><use href="#burst"/></svg></button>
                <button class="active"><svg class="icon"><use href="#arc"/></svg></button>
                <button><svg class="icon"><use href="#tree"/></svg></button>
                <button><svg class="icon"><use href="#motion"/></svg></button>
                <button><svg class="icon"><use href="#display"/></svg></button>
                <button><svg class="icon"><use href="#hammer"/></svg></button>
            </div>
            <div class="panel-head">
                <div class="name-row">
                    <input class="obj-name" type="text" value="body__LOD1" aria-label="Object name">
                    <button class="swatch" aria-label="Object color"></button>
                </div>
                <select class="modifier-list" aria-label="Modifier list"><option>Modifier List</option></select>
                <ul class="stack">
                    <li class="selected"><i class="bulb"></i><i class="expand"></i>Unwrap UVW<b></b></li>
                    <li><i class="bulb"></i><i class="expand"></i>Skin<b></b></li>
                    <li><i class="expand"></i>Editable Mesh<b></b></li>
                </ul>
                <div class="stack-tools">
                    <button><svg class="icon"><use href="#pushpin"/></svg></button>
                    <i class="sep"></i>
                    <button><svg class="icon"><use href="#tube"/></svg></button>
                    <i class="sep"></i>
                    <button><svg class="icon"><use href="#unique"/></svg></button>
                    <button><svg class="icon"><use href="#trash"/></svg></button>
                    <i class="sep"></i>
                    <button><svg class="icon"><use href="#config"/></svg></button>
                </div>
            </div>

            <div class="rollouts">
                <div class="rollout-list">
                    <section class="rollout">
                        <button class="rollout-head">Selection</button>
                        <div class="rollout-body selection">
                            <div class="row modes">
                                <button class="tool"><svg class="icon"><use href="#verts"/></svg></button>
                                <button class="tool"><svg class="icon"><use href="#edge"/></svg></button>
                                <button class="tool on"><svg class="icon"><use href="#poly"/></svg></button>
                                <button class="tool push"><svg class="icon"><use href="#cube"/></svg></button>
                            </div>
                            <fieldset class="modify">
                                <legend>Modify Selection:</legend>
                                <div class="row">
                                    <button class="tool"><svg class="icon"><use href="#grow"/></svg></button>
                                    <button class="tool"><svg class="icon"><use href="#shrink"/></svg></button>
                                    <button class="tool push"><svg class="icon grey"><use href="#dash3"/></svg></button>
                                    <button class="tool"><svg class="icon grey"><use href="#lines3"/></svg></button>
                                </div>
                            </fieldset>
                            <fieldset class="select-by">
                                <legend>Select By:</legend>
                                <div class="row">
                                    <button class="tool on"><svg class="icon"><use href="#eltsel"/></svg></button>
                                    <button class="tool"><svg class="icon"><use href="#dots"/></svg></button>
                                    <button class="tool gap"><svg class="icon"><use href="#fan"/><use href="#cursor"/></svg></button>
                                    <span class="spinner"><input type="text" value="0,0" aria-label="Planar angle"><i></i></span>
                                </div>
                                <div class="row">
                                    <button class="tool"><svg class="icon"><use href="#chkball"/><use href="#cursor"/></svg></button>
                                    <span class="spinner"><input type="text" value="0" aria-label="Material ID"><i></i></span>
                                    <button class="tool gap-sm"><svg class="icon"><use href="#table"/><use href="#cursor"/></svg></button>
                                    <span class="spinner"><input type="text" value="0" aria-label="Smoothing group"><i></i></span>
                                </div>
                            </fieldset>
                        </div>
                    </section>

                    <section class="rollout">
                        <button class="rollout-head">Edit UVs</button>
                        <div class="rollout-body edit-uvs">
                            <button class="push-button">Open UV Editor ...</button>
                            <button class="push-button">Tweak In View</button>
                            <div class="row centered">
                                <button class="tool"><svg class="icon"><use href="#plane"/><use href="#bolt"/></svg></button>
                                <button class="tool on"><svg class="icon"><use href="#planeon"/></svg></button>
                                <button class="tool fly"><svg class="icon"><use href="#plane2"/></svg></button>
                            </div>
                        </div>
                    </section>

                    <section class="rollout">
                        <button class="rollout-head">Channel</button>
                        <div class="rollout-body channel">
                            <div class="button-grid">
                                <button class="push-button">Reset UVWs</button>
                                <button class="push-button">Save...</button>
                                <button class="push-button load">Load...</button>
                            </div>
                            <fieldset>
                                <legend>Channel:</legend>
                                <div class="row">
                                    <label><input type="radio" name="channel" checked> Map Channel:</label>
                                    <span class="spinner wide"><input type="text" value="1" aria-label="Map channel number"><i></i></span>
                                </div>
                                <div class="row">
                                    <label><input type="radio" name="channel"> Vertex Color Channel</label>
                                </div>
                            </fieldset>
                        </div>
                    </section>

                    <section class="rollout">
                        <button class="rollout-head">Peel</button>
                        <div class="rollout-body peel-cut">
                            <div class="row centered">
                                <button class="tool"><svg class="icon"><use href="#peelball"/></svg></button>
                                <button class="tool"><svg class="icon"><use href="#peelball"/></svg></button>
                                <button class="tool"><svg class="icon"><use href="#reset"/></svg></button>
                                <button class="tool"><svg class="icon"><use href="#case"/></svg></button>
                            </div>
                        </div>
                    </section>
                </div>
                <div class="scroll"><i></i></div>
            </div>
        </aside>
    </main>

    <!-- Status bar -->
    <footer class="status">
        <div class="listener">
            <input type="text" class="pink" aria-label="Macro recorder">
            <input type="text" class="white" value="Welcome to MAXScript." aria-label="Listener">
        </div>
        <div class="messages">
            <div class="line">
                <span class="well">1 Object Selected</span>
                <svg class="icon"><use href="#balloon"/></svg>
                <svg class="icon"><use href="#lock"/></svg>
                <svg class="icon"><use href="#coord"/></svg>
                <div class="xyz">
                    <label>X:<input type="text"></label>
                    <label>Y:<input type="text"></label>
                    <label>Z:<input type="text"></label>
                </div>
            </div>
            <div class="line">
                <span class="well">Select texture vertices</span>
                <svg class="icon tag"><use href="#tag"/></svg>
            </div>
        </div>
        <div class="grid-info">
            <span>Grid = 0,254m</span>
            <span>Add Time Tag</span>
        </div>
        <button class="setkey" aria-label="Set keys"><svg class="icon"><use href="#key"/></svg></button>
        <div class="keys">
            <button>Auto</button>
            <select class="light" aria-label="Key set"><option>Selected</option></select>
            <button>Set K.</button>
            <div class="filters"><svg class="icon"><use href="#tangent"/></svg><button>Filters...</button></div>
        </div>
        <div class="playback">
            <div class="line">
                <button><svg class="icon"><use href="#tostart"/></svg></button>
                <button><svg class="icon"><use href="#prev"/></svg></button>
                <button class="fly"><svg class="icon"><use href="#play"/></svg></button>
                <button><svg class="icon"><use href="#next"/></svg></button>
                <button><svg class="icon"><use href="#toend"/></svg></button>
                <button><svg class="icon"><use href="#lens"/></svg></button>
                <button><svg class="icon"><use href="#four"/></svg></button>
                <button class="fly"><svg class="icon"><use href="#green"/></svg></button>
                <button class="fly"><svg class="icon"><use href="#greens"/></svg></button>
            </div>
            <div class="line">
                <button><svg class="icon"><use href="#keymode"/></svg></button>
                <span class="spinner frame"><input type="text" value="0" aria-label="Current frame"><i></i></span>
                <button class="narrow"><svg class="icon"><use href="#timecfg"/></svg></button>
                <button class="narrow"><svg class="icon"><use href="#region"/></svg></button>
                <button class="fly"><svg class="icon"><use href="#hand"/></svg></button>
                <button class="fly"><svg class="icon"><use href="#orbit"/></svg></button>
                <button><svg class="icon"><use href="#maximize"/></svg></button>
            </div>
        </div>
    </footer>

    <!-- Edit UVWs window -->
    <div class="uvwin">
        <div class="uv-title">
            <svg class="icon uv-logo" viewBox="0 0 20 20"><rect width="20" height="20" fill="#8cc9c8"/><rect y="13" width="20" height="7" fill="#d6efee"/><use href="#max" x="3" y="0" width="14" height="13"/></svg>
            <h1>Edit UVWs</h1>
            <div class="win-buttons">
                <button class="win-min" aria-label="Minimize"></button>
                <button class="win-max" aria-label="Maximize"></button>
                <button class="win-close" aria-label="Close"><svg viewBox="0 0 10 10"><path d="M1 1l8 8M9 1L1 9"/></svg></button>
            </div>
        </div>
        <nav class="uv-menu">
            <a href="#">File</a><a href="#">Edit</a><a href="#">Select</a><a href="#">Tools</a><a href="#">Mapping</a><a href="#">Options</a><a href="#">Display</a><a href="#">View</a>
        </nav>
        <div class="uv-bar">
            <button class="tool fly"><svg class="icon"><use href="#move"/></svg></button>
            <button class="tool"><svg class="icon"><use href="#rotate"/></svg></button>
            <button class="tool"><svg class="icon"><use href="#scalebox"/></svg></button>
            <button class="tool on"><svg class="icon"><use href="#freeform"/></svg></button>
            <i class="tick"></i>
            <button class="tool fly"><svg class="icon"><use href="#mirrorblue"/></svg></button>
            <div class="uv-bar-right top">
                <button class="tool on"><svg class="icon small"><use href="#dice"/></svg></button>
                <button class="tool text fly">UV</button>
                <button class="tool"><svg class="icon tiny"><use href="#list"/></svg></button>
                <select class="light" aria-label="Background texture"><option>CheckerPattern&nbsp; ( Checker )</option></select>
            </div>
        </div>

        <div class="uv-main">
            <svg class="uv-canvas">
                <g transform="translate(-8 -144)">
                    <rect x="167" y="201" width="475" height="475" fill="url(#checks)"/>
                    <g transform="translate(460 190) scale(.3333)" fill="none" stroke-width="3">
                        <path class="mesh" d="M371 112L234 178L464 205M371 112L303 277L234 178M303 277L392 268L464 205M327 200L392 268L508 330M303 277L352 327L392 268L433 372L508 330M303 277L252 383M303 277L290 398M352 327L290 500L313 432L385 407L352 327L433 372L385 407M313 432L508 330M433 372L514 467L441 485L433 372M385 407L441 485L320 530M385 407L381 505L313 432M325 480L381 505L320 535M381 505L303 612L290 605L310 500L285 480L286 518L310 500M303 612L495 597M441 485L422 600L362 605L381 505M514 467L422 600L450 717L373 722L362 605L422 600M422 600L373 722L362 605M303 612L313 730L362 605M303 612L228 692L313 600M240 640L303 612L247 730L450 717M247 730L303 612M313 730L215 840L373 722M313 730L290 845L373 722L347 822L408 818L373 722M215 840L290 845L408 818M290 845L347 822L340 877L290 845L288 902L340 877L403 857L347 822M215 840L288 902L200 917L403 857M200 963L288 902L293 943L200 963M340 877L338 927L403 890L340 877M338 927L293 943L258 1038M293 943L345 1018L338 927L400 1012V890M400 1012L459 976L338 927L200 963M288 902L338 927L293 943M8 655L400 1012M8 630L375 985"/>
                        <path class="outline" d="M290 398L252 383L245 300L234 178L230 75L371 112L464 205L508 330L514 467L495 597L450 717L408 818L400 890L459 976L8 610M8 628L400 1010L345 1018L258 1038L200 963L215 840L247 730L222 676L240 640L280 575L287 545L280 515L272 475"/>
                        <path d="M290 398l24 34M270 470l8 12M217 670l14-16" stroke="#2a32b8"/>
                        <path class="hatch" d="M8 420L305 447M8 436L290 465M20 404v46M41 406v48M62 408v48M83 410v48M104 412v50M125 414v52M146 416v52M167 418v52M188 420v54M209 422v54M230 424v54M251 426v56M272 428v56M293 430v36"/>
                        <path class="red" d="M8 402L313 432L283 484L8 447M8 454L283 484"/>
                        <path class="red thick" d="M0 612L232 651"/>
                        <path class="gizmo" d="M0 315H315V652H0M307 307h16v16h-16zM307 475h16v16h-16zM307 644h16v16h-16z"/>
                    </g>
                    <g transform="translate(140 125) scale(.3333)" fill="none" stroke-width="3">
                        <path class="mesh" d="M570 290l12-32 8 32 10-22 5 22M638 290l10-55 10 55"/>
                        <path class="outline" d="M540 290l-5-57 77 39 36-39 40 57"/>
                    </g>
                </g>
            </svg>

            <div class="uv-rollouts">
                <section class="rollout">
                    <button class="rollout-head">Quick Transform</button>
                    <div class="rollout-body quick-transform">
                        <button class="tool small fly"><svg class="icon small"><use href="#pivotred"/></svg></button>
                        <div class="qt-grid">
                            <button class="tool fly"><svg class="icon"><use href="#alignh"/></svg></button>
                            <button class="tool"><svg class="icon"><use href="#diag"/></svg></button>
                            <button class="tool"><svg class="icon"><use href="#rotcw"/></svg></button>
                            <button class="tool fly"><svg class="icon"><use href="#alignv"/></svg></button>
                            <button class="tool"><svg class="icon"><use href="#tilt"/></svg></button>
                            <button class="tool"><svg class="icon"><use href="#rotccw"/></svg></button>
                        </div>
                        <i class="rule"></i>
                        <div class="qt-side">
                            <button class="tool"><svg class="icon"><use href="#spread"/></svg></button>
                            <button class="tool"><svg class="icon"><use href="#dashrect"/></svg></button>
                        </div>
                    </div>
                </section>
                <section class="rollout">
                    <button class="rollout-head">Reshape Elements</button>
                    <div class="rollout-body strip">
                        <button class="tool"><svg class="icon"><use href="#straight"/></svg></button>
                        <button class="tool"><svg class="icon"><use href="#dome"/><use href="#bolt"/></svg></button>
                        <button class="tool fly"><svg class="icon"><use href="#dome"/></svg></button>
                    </div>
                </section>
                <section class="rollout">
                    <button class="rollout-head">Stitch</button>
                    <div class="rollout-body strip">
                        <button class="tool"><svg class="icon"><use href="#stitch1"/></svg></button>
                        <button class="tool"><svg class="icon"><use href="#stitch2"/></svg></button>
                        <button class="tool"><svg class="icon"><use href="#stitch3"/></svg></button>
                        <button class="tool fly"><svg class="icon"><use href="#stitch4"/></svg></button>
                    </div>
                </section>
                <section class="rollout">
                    <button class="rollout-head">Explode</button>
                    <div class="rollout-body explode">
                        <div class="row">
                            <button class="tool"><svg class="icon"><use href="#basket"/></svg></button>
                            <button class="tool"><svg class="icon"><use href="#bricks"/><use href="#corner"/></svg></button>
                            <button class="tool"><svg class="icon"><use href="#bricks"/><use href="#minigrid"/></svg></button>
                            <button class="tool"><svg class="icon"><use href="#bricks"/><use href="#ball" x="3" y="4"/></svg></button>
                            <button class="tool fly"><svg class="icon"><use href="#bricks"/></svg></button>
                        </div>
                        <fieldset>
                            <legend>Weld</legend>
                            <div class="row">
                                <button class="tool"><svg class="icon"><use href="#target"/></svg></button>
                                <button class="tool fly"><svg class="icon"><use href="#weld"/></svg></button>
                                <label class="stacked">Threshold:<span class="spinner"><input type="text" value="0,01"><i></i></span></label>
                            </div>
                        </fieldset>
                    </div>
                </section>
                <section class="rollout">
                    <button class="rollout-head">Peel</button>
                    <div class="rollout-body peel">
                        <div class="box">
                            <label><input type="checkbox" checked> Detach</label>
                            <div class="row">
                                <button class="tool"><svg class="icon"><use href="#peelball"/><use href="#bolt"/></svg></button>
                                <button class="tool"><svg class="icon"><use href="#peelball"/></svg></button>
                                <button class="tool"><svg class="icon"><use href="#reset"/></svg></button>
                            </div>
                        </div>
                        <fieldset>
                            <legend>Pins:</legend>
                            <div class="row">
                                <button class="tool"><svg class="icon grey"><use href="#pin"/></svg></button>
                                <button class="tool"><svg class="icon grey"><use href="#pin"/><use href="#cross"/></svg></button>
                                <button class="tool on"><svg class="icon green"><use href="#pin"/><use href="#bolt"/></svg></button>
                                <i class="tick"></i>
                                <button class="tool"><svg class="icon grey"><use href="#pin"/><use href="#cursor"/></svg></button>
                            </div>
                        </fieldset>
                    </div>
                </section>
                <section class="rollout">
                    <button class="rollout-head">Arrange Elements</button>
                    <div class="rollout-body arrange">
                        <div class="col">
                            <button class="tool fly"><svg class="icon"><use href="#bricks2"/></svg></button>
                            <button class="tool"><svg class="icon"><use href="#packs"/></svg></button>
                        </div>
                        <div class="box">
                            <div class="col">
                                <button class="tool"><svg class="icon"><use href="#bricksml"/></svg></button>
                                <button class="tool"><svg class="icon"><use href="#bricksmid"/></svg></button>
                            </div>
                            <div class="options">
                                <label><input type="checkbox" checked> Rescale</label>
                                <label><input type="checkbox"> Rotate</label>
                                <label class="stacked">Padding:<span class="spinner"><input type="text" value="0,02"><i></i></span></label>
                            </div>
                        </div>
                    </div>
                </section>
            </div>
        </div>

        <div class="uv-bar">
            <button class="tool"><svg class="icon"><use href="#verts"/></svg></button>
            <button class="tool"><svg class="icon"><use href="#edge"/></svg></button>
            <button class="tool on"><svg class="icon"><use href="#poly"/></svg></button>
            <i class="tick"></i>
            <button class="tool"><svg class="icon"><use href="#cube"/></svg></button>
            <i class="tick"></i>
            <button class="tool"><svg class="icon"><use href="#grow"/></svg></button>
            <button class="tool"><svg class="icon"><use href="#shrink"/></svg></button>
            <button class="tool"><svg class="icon green"><use href="#dash3"/></svg></button>
            <button class="tool"><svg class="icon darkgreen"><use href="#dash3"/><use href="#plus"/></svg></button>
            <button class="tool"><svg class="icon darkgreen"><use href="#dash3"/><use href="#minus"/></svg></button>
            <button class="tool"><svg class="icon green"><use href="#lines3"/></svg></button>
            <button class="tool"><svg class="icon darkgreen"><use href="#lines3"/><use href="#plus"/></svg></button>
            <button class="tool"><svg class="icon darkgreen"><use href="#lines3"/><use href="#minus"/></svg></button>
            <button class="tool"><svg class="icon"><use href="#brush"/></svg></button>
            <button class="tool"><svg class="icon"><use href="#brushoff"/></svg></button>
            <button class="tool"><svg class="icon"><use href="#brushoff2"/></svg></button>
            <div class="uv-bar-right soft">
                <button class="tool"><svg class="icon"><use href="#sun"/></svg></button>
                <span class="spinner wide"><input type="text" value="0,0" aria-label="Falloff"><i></i></span>
                <button class="tool gap fly"><svg class="icon"><use href="#slash"/></svg></button>
                <button class="tool text fly">XY</button>
                <i class="tick"></i>
                <button class="tool on"><svg class="icon"><use href="#brushsym"/></svg></button>
                <span class="spinner narrow"><input type="text" value="16" aria-label="Edge distance"><i></i></span>
            </div>
        </div>
        <div class="uv-bar last">
            <button class="tool"><svg class="icon small"><use href="#coord"/></svg></button>
            <i class="tick"></i>
            <label class="coord">U:<span class="spinner"><input type="text"><i></i></span></label>
            <label class="coord">V:<span class="spinner"><input type="text"><i></i></span></label>
            <label class="coord">W:<span class="spinner"><input type="text" value="0,0"><i></i></span></label>
            <i class="tick"></i>
            <div class="uv-bar-right view">
                <button class="tool"><svg class="icon"><use href="#lockgold"/></svg></button>
                <button class="tool"><svg class="icon"><use href="#tri"/></svg></button>
                <i class="tick"></i>
                <button class="tool fly"><svg class="icon"><use href="#bulb"/></svg></button>
                <button class="tool fly"><svg class="icon small"><use href="#snow"/></svg></button>
                <i class="tick"></i>
                <select class="light" aria-label="Material IDs"><option>All IDs</option></select>
                <button class="tool"><svg class="icon small"><use href="#hand"/></svg></button>
                <button class="tool"><svg class="icon small"><use href="#lens"/></svg></button>
                <button class="tool"><svg class="icon small"><use href="#lensbox"/></svg></button>
                <button class="tool fly"><svg class="icon small"><use href="#cubefit"/></svg></button>
                <button class="tool fly"><svg class="icon"><use href="#gridmag"/></svg></button>
            </div>
        </div>

        <!-- Quad menu -->
        <div class="quad">
            <div class="quad-part left upper">
                <ul><li>Render UVW Template...</li></ul>
                <ul><li><i class="opt"></i>Pack UVs</li></ul>
                <ul><li class="off">Paste Weld</li><li class="off">Paste</li><li>Copy</li></ul>
                <ul class="four"><li>Polygon<i class="check"></i></li><li>Edge</li><li>Vertex</li><li>Top-level</li></ul>
            </div>
            <div class="quad-part right upper">
                <ul><li>Unfreeze All</li><li>Freeze Selected</li></ul>
                <ul><li>Unhide All</li><li>Hide Selected</li></ul>
            </div>
            <div class="quad-title left">tools1</div>
            <div class="quad-title right">display</div>
            <div class="quad-title left">tools2</div>
            <div class="quad-title right">transform</div>
            <div class="quad-part left lower">
                <ul><li>Weld Selected</li><li class="off">Target Weld&nbsp;</li><li class="hot">Break</li></ul>
                <ul><li>Detach Edge Verts</li></ul>
                <ul><li><i class="opt"></i>Stitch Selected</li></ul>
                <ul><li><i class="opt"></i>Sketch Vertices</li></ul>
                <ul><li><i class="opt"></i>Relax</li></ul>
            </div>
            <div class="quad-part right lower">
                <ul class="four"><li>Move</li><li>Rotate</li><li>Scale</li><li><i class="check"></i>Freeform Gizmo</li></ul>
                <ul><li>Flip Horizontal</li><li>Flip Vertical</li></ul>
                <ul><li>Mirror Horizontal</li><li>Mirror Vertical</li></ul>
            </div>
        </div>
    </div>

</body>
</html>
```

FILE: styles.css
```css
:root {
    --bg:     #444444;
    --field:  #555555;
    --text:   #cecece;
    --gold:   #eec669;
    --blue:   #3c7fd9;
    --red:    #c75050;
    --chevron: url("data:image/svg+xml,%3Csvg xmlns='http://www.w3.org/2000/svg' viewBox='0 0 10 10'%3E%3Cpath d='M1 3l4 4 4-4' fill='none' stroke='%23444' stroke-width='1.600'/%3E%3C/svg%3E");
}

* {
    box-sizing: border-box;
}

body {
    display: flex;
    flex-direction: column;
    height: 100vh;
    margin: 0;
    overflow: hidden;
    position: relative;

    color: var(--text);
    background: var(--bg);
    font-family: "DejaVu Sans Condensed", "Noto Sans", sans-serif;
    font-size: 9px;
    line-height: 12px;
}

button, input, select {
    margin: 0;
    padding: 0;
    border: 0;
    border-radius: 0;
    color: inherit;
    font: inherit;
}

button {
    background: none;
}

a {
    color: inherit;
    text-decoration: none;
}

ul {
    margin: 0;
    padding: 0;
    list-style: none;
}

.sprite {
    position: absolute;
    width: 0;
    height: 0;
}

.icon {
    display: block;
    flex: none;
    width: 20px;
    height: 20px;
}

.icon.grey { color: #a5a5a5; }
.icon.green { color: #7ddc5a; }
.icon.darkgreen { color: #4d6b46; }
.icon.small { width: 18px; height: 18px; }
.icon.tiny { width: 13px; height: 13px; }

/* Title bar */
.titlebar {
    display: flex;
    flex: none;
    height: 26px;
    color: #1a1508;
    background: var(--gold);
    border-bottom: 1px solid #4b4326;
}

.app-button {
    position: absolute;
    z-index: 2;
    left: 0;
    top: 0;
    display: flex;
    align-items: center;
    width: 34px;
    height: 34px;
    padding: 0 0 4px 3px;
    border: 1px solid #222;
    background: linear-gradient(#c9c9c9, #737373);
}

.app-button .icon {
    width: 22px;
    height: 24px;
}

.app-button i,
.more {
    border: 3px solid transparent;
    border-top-color: currentColor;
    border-bottom: 0;
}

.quick, .info {
    display: flex;
    align-items: center;
    background: #ffffe8;
    color: #efe8a2;
}

.quick {
    width: 332px;
    margin-left: 34px;
    padding-left: 6px;
    gap: 7px;
}

.quick .icon, .info .icon {
    width: 18px;
    height: 16px;
}

.quick .icon:nth-of-type(4), .quick .icon:nth-of-type(5) {
    margin-right: 12px;
}

.workspace {
    appearance: none;
    align-self: stretch;
    flex: 1;
    padding-left: 5px;
    border-left: 1px solid #f4efc0;
    border-right: 1px solid #f4efc0;
    color: #d3bd66;
    background: none;
    font-family: "Noto Sans", sans-serif;
    font-size: 11px;
}

.more {
    margin-right: 7px;
    color: #cdb457;
}

.title {
    display: flex;
    flex: 1;
    gap: 24px;
    justify-content: center;
    font: 15px/25px "Noto Sans", sans-serif;
}

.info {
    width: 346px;
    gap: 7px;
}

.tri-right {
    margin-left: 4px;
    border: 4px solid transparent;
    border-left-color: #e6cf7c;
    border-right: 0;
}

.search {
    flex: 1;
    width: 0;
    background: none;
}

.info .wide {
    margin: 0 10px 0 12px;
}

.win-buttons {
    display: flex;
    align-items: flex-start;
}

.win-min, .win-restore, .win-max {
    position: relative;
    width: 28px;
    height: 21px;
}

.win-min::after, .win-restore::after, .win-max::after {
    content: "";
    position: absolute;
    left: 7px;
    bottom: 5px;
    width: 12px;
    border-bottom: 2px solid #2e2611;
}

.win-restore::after, .win-max::after {
    height: 10px;
    border: 1px solid #2e2611;
    border-top-width: 3px;
}

.win-restore::after {
    bottom: 4px;
    box-shadow: 2px -2px 0 -1px var(--gold), 2px -2px 0 0 #2e2611;
}

.win-close {
    width: 48px;
    height: 21px;
    background: var(--red);
}

.win-close svg {
    width: 9px;
    height: 9px;
    fill: none;
    stroke: #fff;
    stroke-width: 2px;
}

.titlebar .win-buttons {
    width: 135px;
    justify-content: flex-end;
    padding-right: 2px;
}

/* Main menu */
.menubar {
    display: flex;
    flex: none;
    gap: 21px;
    height: 22px;
    padding-left: 46px;
    color: #f2f2f2;
    background: linear-gradient(#a2a2a2, #474747);
    font: 12px/21px "Noto Sans", sans-serif;
}

/* Main toolbar */
.toolbar {
    display: flex;
    flex: none;
    align-items: center;
    align-self: flex-start;
    height: 32px;
    padding: 0 8px 9px 6px;
    border-top: 1px solid #383838;
    border-left: 2px double #222;
    border-right: 1px solid #222;
}

.tool {
    position: relative;
    display: flex;
    flex: none;
    align-items: center;
    justify-content: center;
    width: 23px;
    height: 22px;
}

.tool.on {
    width: 22px;
    background: var(--blue);
    box-shadow: inset 1px 1px 0 #16355f;
}

.tool.text {
    color: #bbb;
    font: 13px/20px "Noto Sans", sans-serif;
}

.toolbar .tool {
    width: 27px;
}

.toolbar .tool.on {
    width: 24px;
}

.toolbar .glyph .icon {
    margin-left: -8px;
}

.glyph span {
    font-size: 12px;
    white-space: nowrap;
}

.fly {
    position: relative;
}

.fly::after {
    content: "";
    position: absolute;
    right: 0;
    bottom: 0;
    border: 2px solid transparent;
    border-right-color: #eee;
    border-bottom-color: #eee;
}

.sep {
    flex: none;
    width: 2px;
    height: 16px;
    margin: 0 1px;
    background: #262626;
}

.tick {
    flex: none;
    width: 1px;
    height: 10px;
    margin: 5px 3px 0;
    align-self: flex-start;
    background: #b5b5b5;
}

select.light {
    appearance: none;
    height: 17px;
    padding: 0 15px 0 3px;
    border: 1px solid #222;
    color: #111;
    background: #e6e6e6 var(--chevron) no-repeat right 3px center / 10px;
}

select.w56 { width: 57px; margin: 0 0 0 1px; }
select.w98 { width: 99px; margin: 0 2px; }

select.dim {
    background: var(--chevron) no-repeat right 3px center / 10px,
        linear-gradient(to left, #eee 17px, #4d4d4d 17px);
}

/* Work area */
.workarea {
    display: flex;
    flex: 1;
    min-height: 0;
    margin-top: -1px;
}

.viewtabs {
    display: flex;
    flex: none;
    flex-direction: column;
    justify-content: flex-end;
    width: 42px;
    background: #333;
}

.tab-play {
    width: 20px;
    height: 20px;
    margin: 0 0 11px 10px;
    padding-left: 7px;
    border-radius: 2px;
    background: #575757;
}

.tab-play::after {
    content: "";
    display: block;
    width: 0;
    border: 5px solid transparent;
    border-left: 6px solid #ddd;
    border-right: 0;
}

.tab-layout {
    height: 47px;
    margin-left: 4px;
    padding: 8px 4px 9px;
    border-radius: 3px 0 0 3px;
    background: linear-gradient(#55718f, #3a7ccf);
}

.tab-layout i {
    display: block;
    height: 100%;
    border: 1px solid #26364c;
    background: linear-gradient(#5a6675, #6c7885);
}

.center {
    display: flex;
    flex: 1;
    flex-direction: column;
    min-width: 0;
}

.viewport {
    flex: 1;
    min-height: 0;
    border: 2px solid #6c5f2e;
}

.scene {
    display: block;
    width: 100%;
    height: 100%;
}

.ground {
    stroke: #595959;
    stroke-width: 0.8px;
}

.cube-label {
    fill: #55565a;
    font-size: 6px;
}

.timeslider {
    display: flex;
    height: 17px;
    padding-top: 1px;
}

.timeslider button {
    width: 13px;
    border: 1px solid #2a2a2a;
    border-top-color: #555;
}

.timeslider .thumb {
    width: 104px;
    border: 2px solid #1c1c1c;
    border-top: 1px solid #666;
}

.trackbar {
    display: flex;
    height: 21px;
    border-top: 1px solid #111;
}

.mini-curve {
    display: flex;
    align-items: center;
    justify-content: center;
    width: 36px;
    background: var(--bg);
}

.mini-curve .icon {
    width: 15px;
    height: 15px;
}

.track {
    flex: 1;
    padding: 0 46px 0 10px;
    background: #262626;
}

.ticks {
    height: 10px;
    margin-right: -1px;
    background: repeating-linear-gradient(90deg, #707070 0 1px, transparent 1px 1%);
}

.labels {
    display: flex;
    justify-content: space-between;
    height: 10px;
    line-height: 10px;
}

.labels span {
    display: flex;
    justify-content: center;
    width: 0;
}

.labels .now {
    position: relative;
    color: #e6dc60;
}

.labels .now::before {
    content: "";
    position: absolute;
    left: -3px;
    top: -10px;
    width: 6px;
    height: 20px;
    background: #a8a02280;
}

/* Command panel */
.panel {
    display: flex;
    flex: none;
    flex-direction: column;
    width: 199px;
    padding: 2px 3px 6px 2px;
}

.tabs {
    display: flex;
    border-bottom: 1px solid #222;
}

.tabs button {
    display: flex;
    justify-content: center;
    width: 24px;
    height: 20px;
    padding-top: 2px;
    border: 1px solid #222;
    border-bottom: 0;
    border-radius: 3px 3px 0 0;
    background: #3a3a3a;
}

.tabs .active {
    margin-bottom: -1px;
    background: var(--bg);
}

.tabs .icon {
    width: 17px;
    height: 16px;
}

.panel-head {
    display: flex;
    flex-direction: column;
    padding: 5px 2px 0 10px;
    border-bottom: 2px solid #161616;
}

.name-row {
    display: flex;
    gap: 4px;
    margin-bottom: 7px;
}

.obj-name {
    flex: 1;
    min-width: 0;
    height: 20px;
    padding: 0 2px 2px;
    border: 1px solid #333;
    border-width: 2px 1px 1px 2px;
    border-color: #111 #333 #333 #111;
    background: var(--field);
    line-height: 15px;
}

.swatch {
    width: 16px;
    background: #e3e3e3;
}

.modifier-list {
    appearance: none;
    height: 22px;
    margin-bottom: 4px;
    padding-left: 2px;
    border: 1px solid #111;
    background: var(--chevron) no-repeat right 4px center / 10px,
        linear-gradient(to left, #fff 17px, var(--field) 17px);
}

.stack {
    height: 105px;
    margin-right: 3px;
    padding-top: 1px;
    border: 1px solid #d8d8d8;
    background: #565656;
}

.stack li {
    display: flex;
    align-items: center;
    gap: 6px;
    height: 13px;
    padding-left: 6px;
    border-bottom: 1px solid #666;
}

.stack .selected {
    color: #fff;
    background: var(--blue);
}

.stack .bulb {
    position: relative;
    width: 7px;
    height: 7px;
    margin: 0 2px 3px;
    border: 2px solid #eee;
    border-radius: 4px;
    background: #111;
}

.stack .bulb::after {
    content: "";
    position: absolute;
    left: 0;
    top: 5px;
    width: 3px;
    height: 3px;
    background: #eee;
}

.stack .expand {
    width: 7px;
    height: 7px;
    background:
        linear-gradient(#aaa, #aaa) center / 5px 1px no-repeat,
        linear-gradient(#aaa, #aaa) center / 1px 5px no-repeat,
        #000;
}

.stack b {
    width: 2px;
    height: 2px;
    margin: 0 15px 0 auto;
    background: #111;
    box-shadow: 5px 2px #111, 9px -5px #111;
}

.stack-tools {
    display: flex;
    align-items: center;
    gap: 8px;
    height: 37px;
    padding: 0 2px 6px 2px;
}

.stack-tools .icon {
    width: 14px;
    height: 14px;
}

.stack-tools .sep {
    height: 12px;
    margin: 0 -1px;
}

.rollouts {
    display: flex;
    flex: 1;
    min-height: 0;
    margin-top: 6px;
    padding-top: 2px;
    border-top: 1px solid #222;
}

.rollout-list {
    flex: 1;
    min-width: 0;
    padding: 0 1px 0 3px;
    overflow: hidden;
}

.scroll {
    width: 3px;
    margin: -2px 4px 0 1px;
    padding-top: 277px;
    background: #0c0c0c;
}

.scroll i {
    display: block;
    height: 100%;
    background: #c5c5c5;
}

.rollout {
    margin-bottom: 6px;
}

.rollout-head {
    position: relative;
    z-index: 1;
    display: block;
    width: calc(100% - 6px);
    height: 14px;
    margin-left: 3px;
    border: 1px solid #606060;
    border-right-color: #555;
    color: #e2e2e2;
    background: #404040;
    line-height: 11px;
    text-align: center;
}

.rollout-head::before {
    content: "";
    position: absolute;
    left: 3px;
    bottom: 2px;
    width: 4px;
    border-bottom: 1px solid #ddd;
}

.rollout-body {
    margin-top: -7px;
    padding: 7px 5px 4px;
    border: 1px solid #222;
    border-bottom-width: 2px;
}

.row {
    display: flex;
    align-items: center;
}

.row.centered {
    justify-content: center;
}

.push {
    margin-left: auto;
}

fieldset {
    min-width: 0;
    margin: 0;
    padding: 0 4px;
    border: 1px solid #222;
}

legend {
    height: 10px;
    margin-left: 1px;
    padding: 0 2px;
    line-height: 10px;
}

.modes {
    padding: 10px 45px 0 10px;
}

.modify {
    margin-top: 7px;
    padding: 9px 43px 11px 7px;
}

.selection {
    padding-bottom: 4px;
}

.select-by {
    margin-top: 3px;
    padding: 11px 4px 7px;
}

.select-by .row + .row {
    margin-top: 11px;
}

.select-by .row {
    align-items: flex-start;
}

.gap { margin-left: 14px; }
.gap-sm { margin-left: 5px; }

.spinner {
    display: inline-flex;
    height: 14px;
}

.spinner input {
    width: 24px;
    padding: 0 1px 1px 2px;
    border: 1px solid #2c2c2c;
    border-width: 2px 1px 1px 2px;
    border-color: #151515 #333 #333 #151515;
    background: var(--field);
}

.spinner i {
    position: relative;
    width: 10px;
    border: 1px solid #2a2a2a;
    border-width: 0 1px 1px 0;
}

.spinner i::before, .spinner i::after {
    content: "";
    position: absolute;
    left: 2px;
    top: 2px;
    border: 3px solid transparent;
    border-top: 0;
    border-bottom: 3px solid #ccc;
}

.spinner i::after {
    top: 8px;
    border-top: 3px solid #ccc;
    border-bottom: 0;
}

.spinner.wide input { width: 36px; }
.spinner.narrow input { width: 18px; }

.push-button {
    display: block;
    border: 1px solid #4e4e4e;
    border-right: 1px solid #1d1d1d;
    border-bottom: 1px solid #1d1d1d;
    border-left-color: #333;
    color: #c6c6c6;
}

.edit-uvs {
    padding: 11px 10px 20px 12px;
}

.edit-uvs .push-button {
    width: 100%;
    height: 27px;
    margin-bottom: 5px;
}

.edit-uvs .row {
    padding-top: 8px;
    padding-right: 36px;
    gap: 1px;
}

.button-grid {
    display: grid;
    grid-template-columns: 1fr 1fr;
    gap: 2px 5px;
    margin-right: 4px;
}

.button-grid .push-button {
    height: 23px;
}

.load {
    grid-column: 2;
}

.channel {
    padding-top: 9px;
    padding-bottom: 15px;
}

.channel fieldset {
    margin: 2px 4px 0 0;
    padding: 5px 10px 10px 7px;
}

.channel .row {
    justify-content: space-between;
    height: 21px;
}

label {
    display: flex;
    align-items: center;
    gap: 6px;
}

input[type="radio"], input[type="checkbox"] {
    appearance: none;
    flex: none;
    width: 9px;
    height: 9px;
    border: 1px solid #151515;
    border-radius: 50%;
    background: #4c4c4c;
}

input[type="radio"]:checked {
    background: radial-gradient(#eee 40%, #4c4c4c 50%);
}

input[type="checkbox"] {
    width: 10px;
    height: 10px;
    border-radius: 0;
    border-width: 2px 1px 1px 2px;
}

input[type="checkbox"]:checked {
    background: #4c4c4c url("data:image/svg+xml,%3Csvg xmlns='http://www.w3.org/2000/svg' viewBox='0 0 10 10'%3E%3Cpath d='M2 5l2 3 5-6' fill='none' stroke='%23fff' stroke-width='2'/%3E%3C/svg%3E");
}

.peel-cut {
    padding-top: 15px;
}

/* Status bar */
.status {
    display: flex;
    flex: none;
    height: 43px;
    padding: 3px 4px 0 0;
    border-top: 1px solid #222;
    border-bottom: 2px solid #b59a5c;
}

.listener {
    display: flex;
    flex: none;
    flex-direction: column;
    width: 83px;
    margin-right: 5px;
    padding-left: 1px;
}

.listener input {
    flex: 1;
    min-height: 0;
    border: 1px solid #888;
}

.pink {
    background: #dcc3c6;
}

.white {
    padding: 0 4px;
    color: #111;
    background: #fff;
    font: 12px "Liberation Mono", monospace;
}

.messages {
    display: flex;
    flex: 1;
    flex-direction: column;
    gap: 3px;
    min-width: 0;
}

.status .line {
    display: flex;
    align-items: center;
    height: 18px;
}

.status .icon {
    width: 14px;
    height: 14px;
}

.messages .icon {
    width: 12px;
    height: 12px;
    margin-left: 10px;
}

.well {
    flex: 1;
    height: 18px;
    padding-left: 5px;
    border: 1px solid #1e1e1e;
    border-right-color: #333;
    border-bottom-color: #555;
    line-height: 16px;
}

.xyz {
    display: flex;
    gap: 12px;
    margin: 0 6px 0 7px;
}

.messages label {
    gap: 1px;
}

.messages label input {
    width: 47px;
    height: 18px;
    border: 1px solid #333;
    border-width: 2px 1px 1px 2px;
    border-color: #151515 #333 #333 #151515;
    background: var(--field);
}

.messages .tag {
    width: 14px;
    height: 14px;
    margin: 0 0 0 3px;
}

.grid-info {
    display: flex;
    flex-direction: column;
    flex: none;
    gap: 3px;
    width: 82px;
    margin: 0 4px 0 8px;
}

.grid-info span {
    height: 18px;
    padding-left: 3px;
    border: 1px solid #2a2a2a;
    line-height: 16px;
}

.setkey {
    width: 36px;
    border: 1px solid #333;
    margin-right: 3px;
}

.setkey .icon {
    width: 20px;
    height: 20px;
    margin: auto;
}

.keys {
    display: grid;
    flex: none;
    grid-template-columns: 36px 96px;
    grid-template-rows: 18px 18px;
    gap: 2px 3px;
    margin-right: 5px;
}

.keys button {
    border: 1px solid #4e4e4e;
    border-right-color: #222;
    border-bottom-color: #222;
}

.filters {
    display: flex;
    align-items: center;
}

.filters button {
    flex: 1;
    height: 18px;
}

.playback {
    display: flex;
    flex: none;
    flex-direction: column;
    gap: 1px;
    width: 180px;
}

.playback button {
    display: flex;
    justify-content: center;
    width: 20px;
}

.playback .narrow {
    width: 17px;
}

.frame {
    margin-right: 6px;
}

.frame input {
    width: 52px;
}

/* Edit UVWs window */
.uvwin {
    position: absolute;
    left: 1px;
    top: 67px;
    bottom: 133px;
    display: flex;
    flex-direction: column;
    width: 58.8%;
    padding: 0 7px;
    background: var(--gold);
    border-top: 1px solid #d9b55e;
    border-bottom: 7px solid var(--gold);
}

.uv-title {
    display: flex;
    flex: none;
    align-items: flex-start;
    height: 30px;
    color: #2a230f;
}

.uv-logo {
    width: 16px;
    height: 16px;
    margin: 7px 0 0 2px;
}

.uv-title h1 {
    flex: 1;
    margin: 0 0 0 86px;
    font: 15px/28px "Noto Sans", sans-serif;
    text-align: center;
}

.uv-menu {
    display: flex;
    flex: none;
    gap: 12px;
    height: 22px;
    padding-left: 6px;
    color: #1a1a1a;
    background: #f5f6f7;
    font: 12px/21px "Noto Sans", sans-serif;
}

.uv-menu a:nth-child(n+6) {
    margin-left: -1px;
}

.uv-bar {
    display: flex;
    flex: none;
    align-items: center;
    height: 25px;
    padding-left: 1px;
    border-top: 1px solid #555;
    border-bottom: 1px solid #555;
    background: var(--bg);
}

.uv-bar > .tool {
    width: 24px;
}

.uv-bar > .tool.on {
    width: 22px;
    margin: 0 1px 0 0;
}

.uv-bar-right {
    display: flex;
    align-items: center;
    align-self: stretch;
    margin-left: auto;
    border-left: 1px solid #666;
}

.uv-bar-right.top {
    width: 226px;
    padding-left: 1px;
}

.uv-bar-right.top select {
    flex: 1;
    margin: 0 14px 3px 1px;
}

.uv-bar-right.soft { width: 191px; }
.uv-bar-right.view { width: 346px; gap: 1px; }

.uv-bar-right.view select {
    flex: 1;
    margin-bottom: 3px;
}

.uv-bar .spinner {
    align-self: flex-start;
    margin-top: 3px;
}

.uv-bar-right.soft .spinner.wide {
    margin-left: 4px;
}

.uv-bar-right.soft .spinner.wide input {
    width: 31px;
}

.uv-bar-right.soft .tick {
    margin: 5px 5px 0;
}

.uv-bar-right.soft .spinner.narrow {
    margin-left: 3px;
}

.uv-bar-right.soft .gap {
    margin-left: 5px;
}

.coord {
    align-self: flex-start;
    gap: 4px;
    margin: 0 5px;
    color: #bbb;
}

.uv-main {
    display: flex;
    flex: 1;
    min-height: 0;
    background: #3c3c3c;
}

.uv-canvas {
    flex: 1;
    min-width: 0;
    height: 100%;
}

.mesh { stroke: #f6f6f6; stroke-width: 2.5px; }
.outline { stroke: #43cf43; }
.hatch { stroke: #e43030; stroke-width: 2px; }
.red { stroke: #d80f0f; stroke-width: 5px; }
.red.thick { stroke-width: 7px; }
.gizmo { stroke: #e0764e; }

.uv-rollouts {
    flex: none;
    width: 136px;
    padding: 2px 0 0 2px;
    border-left: 1px solid #1a1a1a;
    border-top: 1px solid #1a1a1a;
    background: var(--bg);
    overflow: hidden;
}

.uv-rollouts .rollout {
    width: 152px;
}

.quick-transform {
    display: flex;
    align-items: center;
    height: 75px;
}

.quick-transform .small {
    width: 18px;
    height: 18px;
}

.qt-grid {
    display: grid;
    grid-template-columns: 23px 23px 23px;
    gap: 9px 0;
    margin-left: 9px;
}

.rule {
    width: 1px;
    height: 58px;
    margin: 0 5px 0 15px;
    background: #777;
}

.qt-side {
    display: grid;
    gap: 9px;
}

.strip {
    display: flex;
    justify-content: center;
    padding: 13px 19px 7px 5px;
}

.explode {
    padding: 15px 0 0 7px;
}

.explode fieldset, .peel fieldset {
    padding: 0 4px;
}

.explode fieldset {
    margin-top: 3px;
}

.explode fieldset .row {
    height: 40px;
}

.stacked {
    flex-direction: column;
    align-items: flex-start;
    gap: 3px;
}

.explode .stacked {
    gap: 2px;
    margin-left: 24px;
    padding-bottom: 9px;
}

.peel {
    padding: 13px 0 5px 11px;
}

.peel .box {
    padding: 8px 0 8px 18px;
    border: 1px solid #222;
    border-bottom: 0;
}

.peel .box label {
    gap: 11px;
    padding-left: 7px;
}

.peel .box .row {
    margin-top: 8px;
}

.peel fieldset .row {
    height: 35px;
    padding-left: 2px;
}

.peel .row .tick {
    margin-right: 6px;
}

.arrange {
    display: flex;
    gap: 12px;
    padding: 10px 0 4px 5px;
}

.arrange .col {
    display: flex;
    flex-direction: column;
    gap: 12px;
    padding-top: 17px;
}

.arrange .box {
    display: flex;
    flex: 1;
    gap: 12px;
    padding: 0 0 8px 4px;
    border: 1px solid #222;
}

.arrange .box .col {
    padding-top: 16px;
}

.options {
    display: flex;
    flex-direction: column;
    gap: 9px;
    padding-top: 9px;
}

.options label {
    gap: 9px;
}

.options .stacked {
    gap: 4px;
    margin-top: -2px;
}

/* Quad menu */
.quad {
    position: absolute;
    left: 147px;
    top: 67px;
    display: grid;
    grid-template-columns: 158px 156px;
    color: #a9a9a9;
    font: 11px/16px "Liberation Sans", sans-serif;
}

.quad-part {
    border: 1px solid #111;
    background: #464646;
}

.upper {
    align-self: end;
    border-bottom: 0;
}

.lower {
    align-self: start;
    border-top: 0;
    border-bottom: 0;
}

.quad .right {
    margin-left: -1px;
}

.quad ul {
    padding-top: 1px;
    border-bottom: 1px solid #111;
}

.quad .four {
    padding-bottom: 1px;
}

.quad li {
    position: relative;
    height: 16px;
    padding: 0 17px;
}

.quad .left li {
    text-align: right;
}

.quad .off {
    color: #2c2c2c;
}

.quad .hot {
    color: #fff;
    background: var(--blue);
}

.opt {
    position: absolute;
    left: 4px;
    top: 4px;
    width: 8px;
    height: 7px;
    border: 1px solid #111;
    border-top-width: 3px;
}

.check {
    position: absolute;
    right: 5px;
    top: 2px;
    width: 4px;
    height: 9px;
    border: solid #000;
    border-width: 0 2px 2px 0;
    transform: rotate(40deg);
}

.right .check {
    left: 7px;
    right: auto;
}

.quad-title {
    height: 17px;
    padding: 0 2px;
    border: 1px solid #111;
    border-top: 0;
    color: #b5b5b5;
    background: linear-gradient(to left, var(--blue) 16px, #3c3c3c 16px);
    font-size: 10px;
    font-weight: bold;
}

.quad-title.right {
    background: linear-gradient(to right, var(--blue) 16px, #3c3c3c 16px);
    text-align: right;
}
```
